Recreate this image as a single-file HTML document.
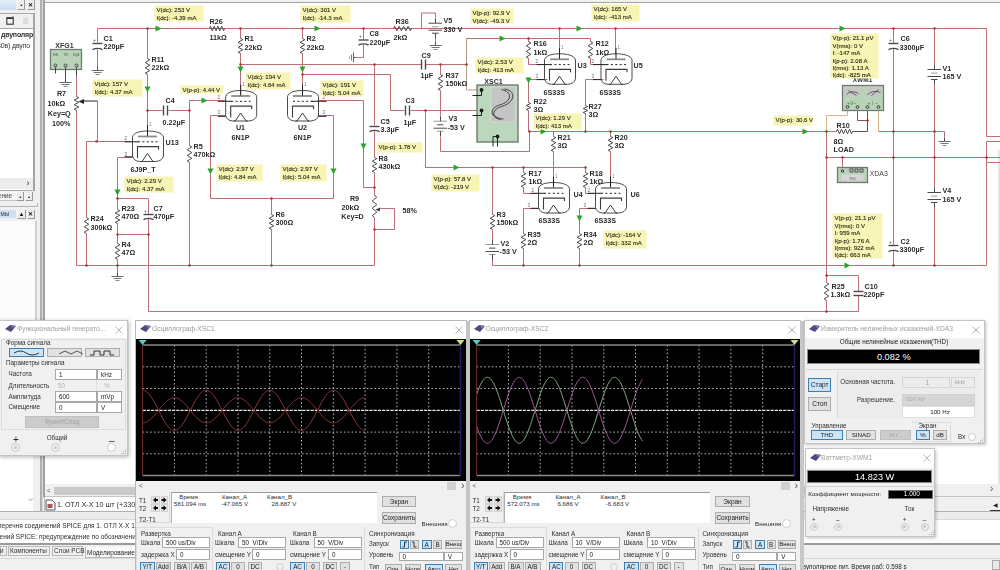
<!DOCTYPE html>
<html><head><meta charset="utf-8">
<style>
*{margin:0;padding:0;box-sizing:border-box}
html,body{width:1000px;height:570px;overflow:hidden;background:#f0f0f0;font-family:"Liberation Sans",sans-serif;color:#222;position:relative}
.a{position:absolute}
.t{position:absolute;white-space:nowrap;line-height:10px;color:#2a2a2a}
</style></head><body><div class="a" style="left:0;top:0;width:1000px;height:570px;overflow:hidden;filter:blur(0.4px)">
<div class="a" style="left:45px;top:1.5px;width:955px;height:484.5px;background:#fff;border-top:1px solid #a4a4a4"></div>
<div class="a" style="left:998px;top:150px;width:2px;height:334px;background:#e4e4e4"></div>
<div class="a" style="left:0px;top:0px;width:45px;height:570px;background:#f0f0f0"></div>
<div class="a" style="left:0px;top:0px;width:16px;height:10px;background:linear-gradient(#e4eef8,#cadcef)"></div>
<div class="a" style="left:17.4px;top:0px;width:7.800000000000001px;height:9.5px;background:#ededed;border-right:1px solid #9a9a9a;border-bottom:1px solid #9a9a9a;border-left:1px solid #fafafa"></div>
<div class="t" style="left:17.4px;top:-0.25px;width:7.800000000000001px;text-align:center;font-size:6px;color:#111;font-weight:bold">&#8226;</div>
<div class="a" style="left:27px;top:0px;width:7.5px;height:9.5px;background:#ededed;border-right:1px solid #9a9a9a;border-bottom:1px solid #9a9a9a;border-left:1px solid #fafafa"></div>
<div class="t" style="left:27px;top:-0.25px;width:7.5px;text-align:center;font-size:6px;color:#111;font-weight:bold">&#10005;</div>
<div class="a" style="left:0px;top:12.5px;width:34.5px;height:1.0px;background:#a8a8a8"></div>
<svg class="a" style="left:5px;top:15px" width="26" height="12"><rect x="1.8" y="2.8" width="6.4" height="6.4" fill="#f4f4f4" stroke="#333" stroke-width="1.1"/><line x1="1.8" y1="3.3" x2="8.2" y2="3.3" stroke="#333" stroke-width="1.4"/><circle cx="8" cy="2" r="0.8" fill="#a44"/><rect x="18" y="2.5" width="5.5" height="6.5" fill="#dcdcdc"/></svg>
<div class="a" style="left:0px;top:27.5px;width:34.5px;height:1.0px;background:#a8a8a8"></div>
<div class="a" style="left:0px;top:28.5px;width:33px;height:161.5px;background:#fff"></div>
<div class="a" style="left:33px;top:13.5px;width:2px;height:176.5px;background:#a4a4a4"></div>
<div class="a" style="left:0;top:28px;width:33px;height:30px;overflow:hidden">
<div class="t" style="left:1px;top:2px;font-size:7px;color:#333;font-weight:bold;letter-spacing:-0.2px">двуполяр</div>
<div class="t" style="left:-3px;top:12.5px;font-size:6.9px;color:#333;letter-spacing:-0.1px">30в) двупо</div>
</div>
<div class="a" style="left:0px;top:178.4px;width:33px;height:11.099999999999994px;background:#ececec"></div>
<div class="t" style="left:26.5px;top:178px;font-size:9px;color:#666;font-weight:bold">&#x203A;</div>
<div class="a" style="left:0px;top:189.5px;width:35px;height:1.0px;background:#a8a8a8"></div>
<div class="a" style="left:0px;top:192px;width:15.5px;height:8.599999999999994px;background:#f6f6f6;border-bottom:1px solid #c8c8c8"></div>
<div class="t" style="left:-2px;top:191.3px;font-size:6.3px;color:#444;">ение</div>
<div class="a" style="left:16.4px;top:192px;width:7.600000000000001px;height:9px;background:#ededed;border-right:1px solid #9a9a9a;border-bottom:1px solid #9a9a9a;border-left:1px solid #fafafa"></div>
<div class="t" style="left:16.4px;top:191.5px;width:7.600000000000001px;text-align:center;font-size:6px;color:#111;font-weight:bold">&#8226;</div>
<div class="a" style="left:25px;top:192px;width:8px;height:9px;background:#ededed;border-right:1px solid #9a9a9a;border-bottom:1px solid #9a9a9a;border-left:1px solid #fafafa"></div>
<div class="t" style="left:25px;top:191.5px;width:8px;text-align:center;font-size:6px;color:#111;font-weight:bold">&#8226;</div>
<div class="a" style="left:0px;top:206px;width:37.5px;height:1px;background:#b4b4b4"></div>
<div class="a" style="left:37px;top:203px;width:1px;height:4px;background:#b4b4b4"></div>
<div class="a" style="left:0px;top:210.3px;width:16px;height:8.199999999999989px;background:#cfe0f2"></div>
<div class="t" style="left:-3px;top:209.4px;font-size:6.3px;color:#444;">емы</div>
<div class="a" style="left:17.4px;top:210px;width:8.200000000000003px;height:8.5px;background:#ededed;border-right:1px solid #9a9a9a;border-bottom:1px solid #9a9a9a;border-left:1px solid #fafafa"></div>
<div class="t" style="left:17.4px;top:209.25px;width:8.200000000000003px;text-align:center;font-size:6px;color:#111;font-weight:bold">&#9650;</div>
<div class="a" style="left:27px;top:210px;width:7.799999999999997px;height:8.5px;background:#ededed;border-right:1px solid #9a9a9a;border-bottom:1px solid #9a9a9a;border-left:1px solid #fafafa"></div>
<div class="t" style="left:27px;top:209.25px;width:7.799999999999997px;text-align:center;font-size:6px;color:#111;font-weight:bold">&#10005;</div>
<div class="a" style="left:0px;top:221px;width:35px;height:99px;background:#fcfcfc"></div>
<div class="a" style="left:35px;top:221px;width:1.5px;height:99px;background:#d0d0d0"></div>
<div class="a" style="left:0px;top:456px;width:33px;height:56px;background:#fff"></div>
<div class="t" style="left:26px;top:492px;font-size:11px;color:#bbb;">&#8964;</div>
<div class="a" style="left:40px;top:0px;width:1.5px;height:512px;background:#b0b0b0"></div>
<div class="a" style="left:41.5px;top:0px;width:1.5px;height:512px;background:#dadada"></div>
<div class="a" style="left:43px;top:0px;width:1.5px;height:512px;background:#a0a0a0"></div>
<svg class="a" style="left:0;top:0" width="1000" height="486" font-family="Liberation Sans, sans-serif"><g transform="translate(0.5,0.5)">
<polyline points="97,28 986,28 986,136 1000,136" fill="none" stroke="#bc6e74" stroke-width="1"/>
<polyline points="1000,141 986,141 986,162 1000,162" fill="none" stroke="#bc6e74" stroke-width="1"/>
<polyline points="986,162 986,265" fill="none" stroke="#bc6e74" stroke-width="1"/>
<polyline points="97,28 97,42" fill="none" stroke="#bc6e74" stroke-width="1"/>
<polyline points="97,49 97,66" fill="none" stroke="#bc6e74" stroke-width="1"/>
<polyline points="147,28 147,58" fill="none" stroke="#bc6e74" stroke-width="1"/>
<polyline points="147,74 147,136" fill="none" stroke="#bc6e74" stroke-width="1"/>
<polyline points="147,110 162,110" fill="none" stroke="#bc6e74" stroke-width="1"/>
<polyline points="168,110 189,110" fill="none" stroke="#bc6e74" stroke-width="1"/>
<polyline points="189,110 189,100 225,100" fill="none" stroke="#bc6e74" stroke-width="1"/>
<polyline points="189,110 189,145" fill="none" stroke="#bc6e74" stroke-width="1"/>
<polyline points="189,162 189,265" fill="none" stroke="#bc6e74" stroke-width="1"/>
<polyline points="240,28 240,38" fill="none" stroke="#bc6e74" stroke-width="1"/>
<polyline points="240,53 240,95" fill="none" stroke="#bc6e74" stroke-width="1"/>
<polyline points="302,28 302,38" fill="none" stroke="#bc6e74" stroke-width="1"/>
<polyline points="302,53 302,95" fill="none" stroke="#bc6e74" stroke-width="1"/>
<polyline points="240,64 421,64" fill="none" stroke="#bc6e74" stroke-width="1"/>
<polyline points="425,64 466,64" fill="none" stroke="#bc6e74" stroke-width="1"/>
<polyline points="302,74 390,74 390,110 404,110" fill="none" stroke="#bc6e74" stroke-width="1"/>
<polyline points="410,110 480,110" fill="none" stroke="#bc6e74" stroke-width="1"/>
<polyline points="363,28 363,39" fill="none" stroke="#bc6e74" stroke-width="1"/>
<polyline points="363,44 363,57 355,57" fill="none" stroke="#bc6e74" stroke-width="1"/>
<polyline points="411,28 421,28 421,12.5 435,12.5 435,17" fill="none" stroke="#bc6e74" stroke-width="1"/>
<polyline points="435,33 435,41" fill="none" stroke="#bc6e74" stroke-width="1"/>
<polyline points="317,100 363,100 363,187 374,187" fill="none" stroke="#bc6e74" stroke-width="1"/>
<polyline points="317,115 333,115 333,198 210,198 210,115 225,115" fill="none" stroke="#bc6e74" stroke-width="1"/>
<polyline points="97,100.5 97,141 132,141" fill="none" stroke="#bc6e74" stroke-width="1"/>
<polyline points="86,141 132,141" fill="none" stroke="#bc6e74" stroke-width="1"/>
<polyline points="86,141 86,217" fill="none" stroke="#bc6e74" stroke-width="1"/>
<polyline points="86,233 86,265" fill="none" stroke="#bc6e74" stroke-width="1"/>
<polyline points="76,75 76,96" fill="none" stroke="#bc6e74" stroke-width="1"/>
<polyline points="76,110 76,265 374,265 374,229" fill="none" stroke="#bc6e74" stroke-width="1"/>
<polyline points="132,157 117,157 117,209" fill="none" stroke="#bc6e74" stroke-width="1"/>
<polyline points="117,223 117,243" fill="none" stroke="#bc6e74" stroke-width="1"/>
<polyline points="117,259 117,272" fill="none" stroke="#bc6e74" stroke-width="1"/>
<polyline points="117,234 148,234" fill="none" stroke="#bc6e74" stroke-width="1"/>
<polyline points="117,198 148,198 148,214" fill="none" stroke="#bc6e74" stroke-width="1"/>
<polyline points="148,218 148,311 858,311" fill="none" stroke="#bc6e74" stroke-width="1"/>
<polyline points="271,198 271,214" fill="none" stroke="#bc6e74" stroke-width="1"/>
<polyline points="271,229 271,265" fill="none" stroke="#bc6e74" stroke-width="1"/>
<polyline points="374,64 374,125" fill="none" stroke="#bc6e74" stroke-width="1"/>
<polyline points="374,130 374,157" fill="none" stroke="#bc6e74" stroke-width="1"/>
<polyline points="374,172 374,195" fill="none" stroke="#bc6e74" stroke-width="1"/>
<polyline points="374,217 374,229" fill="none" stroke="#bc6e74" stroke-width="1"/>
<polyline points="380,208 394,208 394,229 374,229" fill="none" stroke="#bc6e74" stroke-width="1"/>
<polyline points="425,110 425,167 585,167" fill="none" stroke="#bc6e74" stroke-width="1"/>
<polyline points="440,64 440,74" fill="none" stroke="#bc6e74" stroke-width="1"/>
<polyline points="440,90 440,115" fill="none" stroke="#bc6e74" stroke-width="1"/>
<polyline points="440,136 440,151 529,151 529,131" fill="none" stroke="#bc6e74" stroke-width="1"/>
<polyline points="466,38 466,89.5 480,89.5" fill="none" stroke="#b49c8c" stroke-width="1"/>
<polyline points="466,38 590,38 590,41" fill="none" stroke="#bc6e74" stroke-width="1"/>
<polyline points="528,38 528,41" fill="none" stroke="#bc6e74" stroke-width="1"/>
<polyline points="528,58 528,64 547,64" fill="none" stroke="#bc6e74" stroke-width="1"/>
<polyline points="590,58 590,64 603,64" fill="none" stroke="#bc6e74" stroke-width="1"/>
<polyline points="559,28 559,54" fill="none" stroke="#bc6e74" stroke-width="1"/>
<polyline points="615,28 615,54" fill="none" stroke="#bc6e74" stroke-width="1"/>
<polyline points="547,79 528,79 528,102" fill="none" stroke="#bc6e74" stroke-width="1"/>
<polyline points="528,110 528,131" fill="none" stroke="#bc6e74" stroke-width="1"/>
<polyline points="603,79 585,79 585,105" fill="none" stroke="#bc6e74" stroke-width="1"/>
<polyline points="585,113 585,131" fill="none" stroke="#bc6e74" stroke-width="1"/>
<polyline points="529,131 836,131" fill="none" stroke="#bc6e74" stroke-width="1"/>
<polyline points="553,131 553,136" fill="none" stroke="#bc6e74" stroke-width="1"/>
<polyline points="553,151 553,182" fill="none" stroke="#bc6e74" stroke-width="1"/>
<polyline points="610,131 610,136" fill="none" stroke="#bc6e74" stroke-width="1"/>
<polyline points="610,151 610,182" fill="none" stroke="#bc6e74" stroke-width="1"/>
<polyline points="523,167 523,172" fill="none" stroke="#bc6e74" stroke-width="1"/>
<polyline points="523,187 523,193 540,193" fill="none" stroke="#bc6e74" stroke-width="1"/>
<polyline points="585,167 585,172" fill="none" stroke="#bc6e74" stroke-width="1"/>
<polyline points="585,187 585,193 596,193" fill="none" stroke="#bc6e74" stroke-width="1"/>
<polyline points="492,167 492,214" fill="none" stroke="#bc6e74" stroke-width="1"/>
<polyline points="492,229 492,240" fill="none" stroke="#bc6e74" stroke-width="1"/>
<polyline points="492,258 492,265" fill="none" stroke="#bc6e74" stroke-width="1"/>
<polyline points="539,208 523,208 523,233" fill="none" stroke="#bc6e74" stroke-width="1"/>
<polyline points="523,248 523,265" fill="none" stroke="#bc6e74" stroke-width="1"/>
<polyline points="596,208 579,208 579,233" fill="none" stroke="#bc6e74" stroke-width="1"/>
<polyline points="579,248 579,265" fill="none" stroke="#bc6e74" stroke-width="1"/>
<polyline points="492,265 986,265" fill="none" stroke="#bc6e74" stroke-width="1"/>
<polyline points="847,106 847,115 826,115 826,131" fill="none" stroke="#d4b48c" stroke-width="1"/>
<polyline points="857,106 857,120 867,120" fill="none" stroke="#9a4a4a" stroke-width="1"/>
<polyline points="852,131 867,131 867,106" fill="none" stroke="#555" stroke-width="1"/>
<polyline points="878,106 878,131" fill="none" stroke="#d4b48c" stroke-width="1"/>
<polyline points="878,131 944,131 944,137" fill="none" stroke="#bc6e74" stroke-width="1"/>
<polyline points="826,131 826,157 1000,157" fill="none" stroke="#bc6e74" stroke-width="1"/>
<polyline points="826,157 826,282" fill="none" stroke="#bc6e74" stroke-width="1"/>
<polyline points="826,300 826,311" fill="none" stroke="#bc6e74" stroke-width="1"/>
<polyline points="826,275 858,275 858,291" fill="none" stroke="#bc6e74" stroke-width="1"/>
<polyline points="858,295 858,311" fill="none" stroke="#bc6e74" stroke-width="1"/>
<polyline points="842,157 842,170" fill="none" stroke="#bc6e74" stroke-width="1"/>
<polyline points="893,28 893,43" fill="none" stroke="#bc6e74" stroke-width="1"/>
<polyline points="893,48 893,245" fill="none" stroke="#bc6e74" stroke-width="1"/>
<polyline points="893,250 893,265" fill="none" stroke="#bc6e74" stroke-width="1"/>
<polyline points="934,28 934,64" fill="none" stroke="#bc6e74" stroke-width="1"/>
<polyline points="934,79 934,192" fill="none" stroke="#bc6e74" stroke-width="1"/>
<polyline points="934,203 934,265" fill="none" stroke="#bc6e74" stroke-width="1"/>
<circle cx="147" cy="28" r="1.3" fill="#a83838"/>
<circle cx="240" cy="28" r="1.3" fill="#a83838"/>
<circle cx="302" cy="28" r="1.3" fill="#a83838"/>
<circle cx="363" cy="28" r="1.3" fill="#a83838"/>
<circle cx="559" cy="28" r="1.3" fill="#a83838"/>
<circle cx="615" cy="28" r="1.3" fill="#a83838"/>
<circle cx="893" cy="28" r="1.3" fill="#a83838"/>
<circle cx="934" cy="28" r="1.3" fill="#a83838"/>
<circle cx="240" cy="64" r="1.3" fill="#a83838"/>
<circle cx="374" cy="64" r="1.3" fill="#a83838"/>
<circle cx="440" cy="64" r="1.3" fill="#a83838"/>
<circle cx="466" cy="64" r="1.3" fill="#a83838"/>
<circle cx="302" cy="74" r="1.3" fill="#a83838"/>
<circle cx="147" cy="110" r="1.3" fill="#a83838"/>
<circle cx="189" cy="110" r="1.3" fill="#a83838"/>
<circle cx="425" cy="110" r="1.3" fill="#a83838"/>
<circle cx="96" cy="141" r="1.3" fill="#a83838"/>
<circle cx="117" cy="198" r="1.3" fill="#a83838"/>
<circle cx="271" cy="198" r="1.3" fill="#a83838"/>
<circle cx="117" cy="234" r="1.3" fill="#a83838"/>
<circle cx="148" cy="234" r="1.3" fill="#a83838"/>
<circle cx="86" cy="265" r="1.3" fill="#a83838"/>
<circle cx="117" cy="265" r="1.3" fill="#a83838"/>
<circle cx="189" cy="265" r="1.3" fill="#a83838"/>
<circle cx="271" cy="265" r="1.3" fill="#a83838"/>
<circle cx="374" cy="187" r="1.3" fill="#a83838"/>
<circle cx="374" cy="229" r="1.3" fill="#a83838"/>
<circle cx="528" cy="38" r="1.3" fill="#a83838"/>
<circle cx="529" cy="131" r="1.3" fill="#a83838"/>
<circle cx="585" cy="131" r="1.3" fill="#a83838"/>
<circle cx="610" cy="131" r="1.3" fill="#a83838"/>
<circle cx="826" cy="131" r="1.3" fill="#a83838"/>
<circle cx="893" cy="131" r="1.3" fill="#a83838"/>
<circle cx="934" cy="131" r="1.3" fill="#a83838"/>
<circle cx="867" cy="120" r="1.3" fill="#a83838"/>
<circle cx="492" cy="167" r="1.3" fill="#a83838"/>
<circle cx="523" cy="167" r="1.3" fill="#a83838"/>
<circle cx="585" cy="167" r="1.3" fill="#a83838"/>
<circle cx="826" cy="157" r="1.3" fill="#a83838"/>
<circle cx="842" cy="157" r="1.3" fill="#a83838"/>
<circle cx="893" cy="157" r="1.3" fill="#a83838"/>
<circle cx="934" cy="157" r="1.3" fill="#a83838"/>
<circle cx="986" cy="157" r="1.3" fill="#a83838"/>
<circle cx="523" cy="265" r="1.3" fill="#a83838"/>
<circle cx="579" cy="265" r="1.3" fill="#a83838"/>
<circle cx="893" cy="265" r="1.3" fill="#a83838"/>
<circle cx="934" cy="265" r="1.3" fill="#a83838"/>
<circle cx="826" cy="275" r="1.3" fill="#a83838"/>
<circle cx="826" cy="311" r="1.3" fill="#a83838"/>
<polygon points="155,25 161,28 155,31" fill="#2aa52a"/>
<polygon points="314,25 320,28 314,31" fill="#2aa52a"/>
<polygon points="499,35 505,38 499,41" fill="#2aa52a"/>
<polygon points="576,25 582,28 576,31" fill="#2aa52a"/>
<polygon points="839,25 845,28 839,31" fill="#2aa52a"/>
<polygon points="201,97 207,100 201,103" fill="#2aa52a"/>
<polygon points="453,164 459,167 453,170" fill="#2aa52a"/>
<polygon points="540,128 546,131 540,134" fill="#2aa52a"/>
<polygon points="802,128 808,131 802,134" fill="#2aa52a"/>
<polygon points="844,262 850,265 844,268" fill="#2aa52a"/>
<polygon points="144,86 150,86 147,92" fill="#2aa52a"/>
<polygon points="237,66 243,66 240,72" fill="#2aa52a"/>
<polygon points="299,66 305,66 302,72" fill="#2aa52a"/>
<polygon points="114,189 120,189 117,195" fill="#2aa52a"/>
<polygon points="207,168 213,168 210,174" fill="#2aa52a"/>
<polygon points="330,168 336,168 333,174" fill="#2aa52a"/>
<polygon points="360,143 366,143 363,149" fill="#2aa52a"/>
<polygon points="525,77 531,77 528,83" fill="#2aa52a"/>
<polygon points="576,215 582,215 579,221" fill="#2aa52a"/>
<polyline points="147.0,58.0 149.3,59.3 144.7,62.0 149.3,64.7 144.7,67.3 149.3,70.0 144.7,72.7 147.0,74.0" fill="none" stroke="#4a4a4a" stroke-width="1"/>
<polyline points="240.0,38.0 242.3,39.2 237.7,41.8 242.3,44.2 237.7,46.8 242.3,49.2 237.7,51.8 240.0,53.0" fill="none" stroke="#4a4a4a" stroke-width="1"/>
<polyline points="302.0,38.0 304.3,39.2 299.7,41.8 304.3,44.2 299.7,46.8 304.3,49.2 299.7,51.8 302.0,53.0" fill="none" stroke="#4a4a4a" stroke-width="1"/>
<polyline points="189.0,145.0 191.3,146.4 186.7,149.2 191.3,152.1 186.7,154.9 191.3,157.8 186.7,160.6 189.0,162.0" fill="none" stroke="#4a4a4a" stroke-width="1"/>
<polyline points="86.0,217.0 88.3,218.3 83.7,221.0 88.3,223.7 83.7,226.3 88.3,229.0 83.7,231.7 86.0,233.0" fill="none" stroke="#4a4a4a" stroke-width="1"/>
<polyline points="117.0,209.0 119.3,210.2 114.7,212.5 119.3,214.8 114.7,217.2 119.3,219.5 114.7,221.8 117.0,223.0" fill="none" stroke="#4a4a4a" stroke-width="1"/>
<polyline points="117.0,243.0 119.3,244.3 114.7,247.0 119.3,249.7 114.7,252.3 119.3,255.0 114.7,257.7 117.0,259.0" fill="none" stroke="#4a4a4a" stroke-width="1"/>
<polyline points="271.0,214.0 273.3,215.2 268.7,217.8 273.3,220.2 268.7,222.8 273.3,225.2 268.7,227.8 271.0,229.0" fill="none" stroke="#4a4a4a" stroke-width="1"/>
<polyline points="374.0,157.0 376.3,158.2 371.7,160.8 376.3,163.2 371.7,165.8 376.3,168.2 371.7,170.8 374.0,172.0" fill="none" stroke="#4a4a4a" stroke-width="1"/>
<polyline points="440.0,74.0 442.3,75.3 437.7,78.0 442.3,80.7 437.7,83.3 442.3,86.0 437.7,88.7 440.0,90.0" fill="none" stroke="#4a4a4a" stroke-width="1"/>
<polyline points="528.0,41.0 530.3,42.4 525.7,45.2 530.3,48.1 525.7,50.9 530.3,53.8 525.7,56.6 528.0,58.0" fill="none" stroke="#4a4a4a" stroke-width="1"/>
<polyline points="590.0,41.0 592.3,42.4 587.7,45.2 592.3,48.1 587.7,50.9 592.3,53.8 587.7,56.6 590.0,58.0" fill="none" stroke="#4a4a4a" stroke-width="1"/>
<polyline points="528.0,102.0 530.3,103.0 525.7,105.0 530.3,107.0 525.7,109.0 528.0,110.0" fill="none" stroke="#4a4a4a" stroke-width="1"/>
<polyline points="585.0,105.0 587.3,106.0 582.7,108.0 587.3,110.0 582.7,112.0 585.0,113.0" fill="none" stroke="#4a4a4a" stroke-width="1"/>
<polyline points="553.0,136.0 555.3,137.2 550.7,139.8 555.3,142.2 550.7,144.8 555.3,147.2 550.7,149.8 553.0,151.0" fill="none" stroke="#4a4a4a" stroke-width="1"/>
<polyline points="610.0,136.0 612.3,137.2 607.7,139.8 612.3,142.2 607.7,144.8 612.3,147.2 607.7,149.8 610.0,151.0" fill="none" stroke="#4a4a4a" stroke-width="1"/>
<polyline points="523.0,172.0 525.3,173.2 520.7,175.8 525.3,178.2 520.7,180.8 525.3,183.2 520.7,185.8 523.0,187.0" fill="none" stroke="#4a4a4a" stroke-width="1"/>
<polyline points="585.0,172.0 587.3,173.2 582.7,175.8 587.3,178.2 582.7,180.8 587.3,183.2 582.7,185.8 585.0,187.0" fill="none" stroke="#4a4a4a" stroke-width="1"/>
<polyline points="492.0,214.0 494.3,215.2 489.7,217.8 494.3,220.2 489.7,222.8 494.3,225.2 489.7,227.8 492.0,229.0" fill="none" stroke="#4a4a4a" stroke-width="1"/>
<polyline points="523.0,233.0 525.3,234.2 520.7,236.8 525.3,239.2 520.7,241.8 525.3,244.2 520.7,246.8 523.0,248.0" fill="none" stroke="#4a4a4a" stroke-width="1"/>
<polyline points="579.0,233.0 581.3,234.2 576.7,236.8 581.3,239.2 576.7,241.8 581.3,244.2 576.7,246.8 579.0,248.0" fill="none" stroke="#4a4a4a" stroke-width="1"/>
<polyline points="826.0,282.0 828.3,283.5 823.7,286.5 828.3,289.5 823.7,292.5 828.3,295.5 823.7,298.5 826.0,300.0" fill="none" stroke="#4a4a4a" stroke-width="1"/>
<polyline points="76.0,96.0 78.3,97.2 73.7,99.5 78.3,101.8 73.7,104.2 78.3,106.5 73.7,108.8 76.0,110.0" fill="none" stroke="#4a4a4a" stroke-width="1"/>
<polyline points="374.0,195.0 376.3,196.8 371.7,200.5 376.3,204.2 371.7,207.8 376.3,211.5 371.7,215.2 374.0,217.0" fill="none" stroke="#4a4a4a" stroke-width="1"/>
<polyline points="209.0,28.0 209.9,25.7 211.8,30.3 213.7,25.7 215.6,30.3 217.4,25.7 219.3,30.3 221.2,25.7 223.1,30.3 224.0,28.0" fill="none" stroke="#4a4a4a" stroke-width="1"/>
<polyline points="393.0,28.0 394.1,25.7 396.4,30.3 398.6,25.7 400.9,30.3 403.1,25.7 405.4,30.3 407.6,25.7 409.9,30.3 411.0,28.0" fill="none" stroke="#4a4a4a" stroke-width="1"/>
<polyline points="836.0,131.0 837.0,128.7 839.0,133.3 841.0,128.7 843.0,133.3 845.0,128.7 847.0,133.3 849.0,128.7 851.0,133.3 852.0,131.0" fill="none" stroke="#4a4a4a" stroke-width="1"/>
<polygon points="83.5,98.5 78,101 83.5,103.5" fill="#222"/>
<polyline points="83,100.5 97,100.5" fill="none" stroke="#222" stroke-width="1"/>
<polygon points="380,207 375,209 379,211" fill="#333"/>
<line x1="92" y1="43" x2="102" y2="43" stroke="#4a4a4a" stroke-width="1.4"/>
<path d="M92,49.2 Q97,46.5 102,49.2" fill="none" stroke="#4a4a4a" stroke-width="1.4"/>
<text x="92.5" y="41" font-size="5" font-weight="normal" text-anchor="start" fill="#555">+</text>
<line x1="358" y1="39.5" x2="368" y2="39.5" stroke="#4a4a4a" stroke-width="1.4"/>
<path d="M358,44.7 Q363,42.0 368,44.7" fill="none" stroke="#4a4a4a" stroke-width="1.4"/>
<text x="358.5" y="37.5" font-size="5" font-weight="normal" text-anchor="start" fill="#555">+</text>
<line x1="888" y1="43" x2="898" y2="43" stroke="#4a4a4a" stroke-width="1.4"/>
<path d="M888,49.2 Q893,46.5 898,49.2" fill="none" stroke="#4a4a4a" stroke-width="1.4"/>
<text x="888.5" y="41" font-size="5" font-weight="normal" text-anchor="start" fill="#555">+</text>
<line x1="888" y1="245" x2="898" y2="245" stroke="#4a4a4a" stroke-width="1.4"/>
<path d="M888,251.2 Q893,248.5 898,251.2" fill="none" stroke="#4a4a4a" stroke-width="1.4"/>
<text x="888.5" y="243" font-size="5" font-weight="normal" text-anchor="start" fill="#555">+</text>
<line x1="143" y1="214" x2="153" y2="214" stroke="#4a4a4a" stroke-width="1.4"/>
<path d="M143,219.2 Q148,216.5 153,219.2" fill="none" stroke="#4a4a4a" stroke-width="1.4"/>
<text x="143.5" y="212" font-size="5" font-weight="normal" text-anchor="start" fill="#555">+</text>
<line x1="369" y1="126" x2="379" y2="126" stroke="#4a4a4a" stroke-width="1.4"/>
<path d="M369,131.2 Q374,128.5 379,131.2" fill="none" stroke="#4a4a4a" stroke-width="1.4"/>
<line x1="853" y1="291" x2="863" y2="291" stroke="#4a4a4a" stroke-width="1.4"/><line x1="853" y1="295" x2="863" y2="295" stroke="#4a4a4a" stroke-width="1.4"/>
<line x1="421" y1="59" x2="421" y2="69" stroke="#4a4a4a" stroke-width="1.4"/>
<line x1="425" y1="59" x2="425" y2="69" stroke="#4a4a4a" stroke-width="1.4"/>
<line x1="405" y1="105" x2="405" y2="115" stroke="#4a4a4a" stroke-width="1.4"/>
<line x1="409" y1="105" x2="409" y2="115" stroke="#4a4a4a" stroke-width="1.4"/>
<line x1="163" y1="105" x2="163" y2="115" stroke="#4a4a4a" stroke-width="1.4"/>
<line x1="167" y1="105" x2="167" y2="115" stroke="#4a4a4a" stroke-width="1.4"/>
<line x1="428" y1="22.7" x2="441.5" y2="22.7" stroke="#4a4a4a" stroke-width="1"/>
<line x1="431.5" y1="26.3" x2="438" y2="26.3" stroke="#999" stroke-width="1"/>
<line x1="428" y1="29.7" x2="441.5" y2="29.7" stroke="#4a4a4a" stroke-width="1"/>
<line x1="431.5" y1="32.7" x2="438" y2="32.7" stroke="#4a4a4a" stroke-width="1"/>
<line x1="435" y1="17.7" x2="435" y2="22.7" stroke="#4a4a4a" stroke-width="1"/>
<line x1="435" y1="32.7" x2="435" y2="37.7" stroke="#4a4a4a" stroke-width="1"/>
<line x1="433" y1="120.7" x2="446.5" y2="120.7" stroke="#999" stroke-width="1"/>
<line x1="436.5" y1="124.3" x2="443" y2="124.3" stroke="#4a4a4a" stroke-width="1"/>
<line x1="433" y1="127.7" x2="446.5" y2="127.7" stroke="#4a4a4a" stroke-width="1"/>
<line x1="436.5" y1="130.7" x2="443" y2="130.7" stroke="#999" stroke-width="1"/>
<line x1="440" y1="115.7" x2="440" y2="120.7" stroke="#4a4a4a" stroke-width="1"/>
<line x1="440" y1="130.7" x2="440" y2="135.7" stroke="#4a4a4a" stroke-width="1"/>
<line x1="485" y1="244" x2="498.5" y2="244" stroke="#999" stroke-width="1"/>
<line x1="488.5" y1="247.6" x2="495" y2="247.6" stroke="#4a4a4a" stroke-width="1"/>
<line x1="485" y1="251" x2="498.5" y2="251" stroke="#4a4a4a" stroke-width="1"/>
<line x1="488.5" y1="254" x2="495" y2="254" stroke="#999" stroke-width="1"/>
<line x1="492" y1="239" x2="492" y2="244" stroke="#4a4a4a" stroke-width="1"/>
<line x1="492" y1="254" x2="492" y2="259" stroke="#4a4a4a" stroke-width="1"/>
<line x1="927" y1="69" x2="940.5" y2="69" stroke="#4a4a4a" stroke-width="1"/>
<line x1="930.5" y1="72.6" x2="937" y2="72.6" stroke="#999" stroke-width="1"/>
<line x1="927" y1="76" x2="940.5" y2="76" stroke="#4a4a4a" stroke-width="1"/>
<line x1="930.5" y1="79" x2="937" y2="79" stroke="#4a4a4a" stroke-width="1"/>
<line x1="934" y1="64" x2="934" y2="69" stroke="#4a4a4a" stroke-width="1"/>
<line x1="934" y1="79" x2="934" y2="84" stroke="#4a4a4a" stroke-width="1"/>
<line x1="927" y1="192" x2="940.5" y2="192" stroke="#4a4a4a" stroke-width="1"/>
<line x1="930.5" y1="195.6" x2="937" y2="195.6" stroke="#999" stroke-width="1"/>
<line x1="927" y1="199" x2="940.5" y2="199" stroke="#4a4a4a" stroke-width="1"/>
<line x1="930.5" y1="202" x2="937" y2="202" stroke="#4a4a4a" stroke-width="1"/>
<line x1="934" y1="187" x2="934" y2="192" stroke="#4a4a4a" stroke-width="1"/>
<line x1="934" y1="202" x2="934" y2="207" stroke="#4a4a4a" stroke-width="1"/>
<line x1="97" y1="66" x2="97" y2="70" stroke="#4a4a4a" stroke-width="1"/>
<line x1="91" y1="70" x2="103" y2="70" stroke="#666" stroke-width="1"/>
<line x1="93" y1="72" x2="101" y2="72" stroke="#777" stroke-width="1"/>
<line x1="95" y1="74" x2="99" y2="74" stroke="#888" stroke-width="1"/>
<line x1="65" y1="78" x2="65" y2="82" stroke="#4a4a4a" stroke-width="1"/>
<line x1="59" y1="82" x2="71" y2="82" stroke="#666" stroke-width="1"/>
<line x1="61" y1="84" x2="69" y2="84" stroke="#777" stroke-width="1"/>
<line x1="63" y1="86" x2="67" y2="86" stroke="#888" stroke-width="1"/>
<line x1="117" y1="272" x2="117" y2="276" stroke="#4a4a4a" stroke-width="1"/>
<line x1="111" y1="276" x2="123" y2="276" stroke="#666" stroke-width="1"/>
<line x1="113" y1="278" x2="121" y2="278" stroke="#777" stroke-width="1"/>
<line x1="115" y1="280" x2="119" y2="280" stroke="#888" stroke-width="1"/>
<line x1="435" y1="41" x2="435" y2="45" stroke="#4a4a4a" stroke-width="1"/>
<line x1="429" y1="45" x2="441" y2="45" stroke="#666" stroke-width="1"/>
<line x1="431" y1="47" x2="439" y2="47" stroke="#777" stroke-width="1"/>
<line x1="433" y1="49" x2="437" y2="49" stroke="#888" stroke-width="1"/>
<line x1="944" y1="137" x2="944" y2="141" stroke="#4a4a4a" stroke-width="1"/>
<line x1="938" y1="141" x2="950" y2="141" stroke="#666" stroke-width="1"/>
<line x1="940" y1="143" x2="948" y2="143" stroke="#777" stroke-width="1"/>
<line x1="942" y1="145" x2="946" y2="145" stroke="#888" stroke-width="1"/>
<line x1="355" y1="57" x2="353" y2="57" stroke="#4a4a4a"/><line x1="353" y1="52" x2="353" y2="62" stroke="#666"/><line x1="351" y1="54" x2="351" y2="60" stroke="#777"/><line x1="349" y1="56" x2="349" y2="58" stroke="#888"/>
<path d="M132,155.5 L132,136.5 C133,132.0 140,130.5 147,130.5 C154,130.5 162,132.0 163,136.5 L163,155.5 Q162,160.5 155,161.0 L139,161.0 Q133,160.5 132,155.5 Z" fill="none" stroke="#4a4a4a" stroke-width="1"/>
<line x1="137.5" y1="136.0" x2="156.5" y2="136.0" stroke="#8c8c8c" stroke-width="1.8"/>
<line x1="137.5" y1="141.3" x2="157" y2="141.3" stroke="#222" stroke-width="1" stroke-dasharray="2,2.4"/>
<polyline points="137,157.5 137,146.1 158,146.1 158,149.0" fill="none" stroke="#3c3c3c" stroke-width="1.1"/>
<polyline points="140,161.0 141.5,161.0 147,153.0 152.5,161.0 154,161.0" fill="none" stroke="#3c3c3c" stroke-width="1"/>
<line x1="147" y1="124.5" x2="147" y2="135.5" stroke="#222" stroke-width="1"/>
<line x1="124" y1="141.3" x2="138" y2="141.3" stroke="#222" stroke-width="1"/>
<line x1="124" y1="156.3" x2="132" y2="156.3" stroke="#222" stroke-width="1"/>
<text x="148.5" y="125.5" font-size="4.5" font-weight="normal" text-anchor="start" fill="#777">1</text>
<path d="M225.2,115 L225.2,96 C226.2,91.5 233.2,90 240.2,90 C247.2,90 255.2,91.5 256.2,96 L256.2,115 Q255.2,120 248.2,120.5 L232.2,120.5 Q226.2,120 225.2,115 Z" fill="none" stroke="#4a4a4a" stroke-width="1"/>
<line x1="230.7" y1="95.5" x2="249.7" y2="95.5" stroke="#8c8c8c" stroke-width="1.8"/>
<line x1="230.7" y1="100.8" x2="250.2" y2="100.8" stroke="#222" stroke-width="1" stroke-dasharray="2,2.4"/>
<polyline points="230.2,117 230.2,105.6 251.2,105.6 251.2,108.5" fill="none" stroke="#3c3c3c" stroke-width="1.1"/>
<polyline points="233.2,120.5 234.7,120.5 240.2,112.5 245.7,120.5 247.2,120.5" fill="none" stroke="#3c3c3c" stroke-width="1"/>
<line x1="240.2" y1="84" x2="240.2" y2="95" stroke="#222" stroke-width="1"/>
<line x1="217.2" y1="100.8" x2="231.2" y2="100.8" stroke="#222" stroke-width="1"/>
<line x1="217.2" y1="115.8" x2="225.2" y2="115.8" stroke="#222" stroke-width="1"/>
<text x="241.7" y="85" font-size="4.5" font-weight="normal" text-anchor="start" fill="#777">1</text>
<path d="M287,115 L287,96 C288,91.5 295,90 302,90 C309,90 317,91.5 318,96 L318,115 Q317,120 310,120.5 L294,120.5 Q288,120 287,115 Z" fill="none" stroke="#4a4a4a" stroke-width="1"/>
<line x1="292.5" y1="95.5" x2="311.5" y2="95.5" stroke="#8c8c8c" stroke-width="1.8"/>
<line x1="292.5" y1="100.8" x2="312" y2="100.8" stroke="#222" stroke-width="1" stroke-dasharray="2,2.4"/>
<polyline points="292,117 292,105.6 313,105.6 313,108.5" fill="none" stroke="#3c3c3c" stroke-width="1.1"/>
<polyline points="295,120.5 296.5,120.5 302,112.5 307.5,120.5 309,120.5" fill="none" stroke="#3c3c3c" stroke-width="1"/>
<line x1="302" y1="84" x2="302" y2="95" stroke="#222" stroke-width="1"/>
<line x1="311" y1="100.8" x2="326" y2="100.8" stroke="#222" stroke-width="1"/>
<line x1="318" y1="115.8" x2="326" y2="115.8" stroke="#222" stroke-width="1"/>
<text x="303.5" y="85" font-size="4.5" font-weight="normal" text-anchor="start" fill="#777">1</text>
<path d="M544,78.3 L544,59.3 C545,54.8 552,53.3 559,53.3 C566,53.3 574,54.8 575,59.3 L575,78.3 Q574,83.3 567,83.8 L551,83.8 Q545,83.3 544,78.3 Z" fill="none" stroke="#4a4a4a" stroke-width="1"/>
<line x1="549.5" y1="58.8" x2="568.5" y2="58.8" stroke="#8c8c8c" stroke-width="1.8"/>
<line x1="549.5" y1="64.1" x2="569" y2="64.1" stroke="#222" stroke-width="1" stroke-dasharray="2,2.4"/>
<polyline points="549,80.3 549,68.89999999999999 570,68.89999999999999 570,71.8" fill="none" stroke="#3c3c3c" stroke-width="1.1"/>
<polyline points="552,83.8 553.5,83.8 559,75.8 564.5,83.8 566,83.8" fill="none" stroke="#3c3c3c" stroke-width="1"/>
<line x1="559" y1="47.3" x2="559" y2="58.3" stroke="#222" stroke-width="1"/>
<line x1="536" y1="64.1" x2="550" y2="64.1" stroke="#222" stroke-width="1"/>
<line x1="536" y1="79.1" x2="544" y2="79.1" stroke="#222" stroke-width="1"/>
<text x="560.5" y="48.3" font-size="4.5" font-weight="normal" text-anchor="start" fill="#777">1</text>
<path d="M600.5,78.3 L600.5,59.3 C601.5,54.8 608.5,53.3 615.5,53.3 C622.5,53.3 630.5,54.8 631.5,59.3 L631.5,78.3 Q630.5,83.3 623.5,83.8 L607.5,83.8 Q601.5,83.3 600.5,78.3 Z" fill="none" stroke="#4a4a4a" stroke-width="1"/>
<line x1="606.0" y1="58.8" x2="625.0" y2="58.8" stroke="#8c8c8c" stroke-width="1.8"/>
<line x1="606.0" y1="64.1" x2="625.5" y2="64.1" stroke="#222" stroke-width="1" stroke-dasharray="2,2.4"/>
<polyline points="605.5,80.3 605.5,68.89999999999999 626.5,68.89999999999999 626.5,71.8" fill="none" stroke="#3c3c3c" stroke-width="1.1"/>
<polyline points="608.5,83.8 610.0,83.8 615.5,75.8 621.0,83.8 622.5,83.8" fill="none" stroke="#3c3c3c" stroke-width="1"/>
<line x1="615.5" y1="47.3" x2="615.5" y2="58.3" stroke="#222" stroke-width="1"/>
<line x1="592.5" y1="64.1" x2="606.5" y2="64.1" stroke="#222" stroke-width="1"/>
<line x1="592.5" y1="79.1" x2="600.5" y2="79.1" stroke="#222" stroke-width="1"/>
<text x="617.0" y="48.3" font-size="4.5" font-weight="normal" text-anchor="start" fill="#777">1</text>
<path d="M538,207 L538,188 C539,183.5 546,182 553,182 C560,182 568,183.5 569,188 L569,207 Q568,212 561,212.5 L545,212.5 Q539,212 538,207 Z" fill="none" stroke="#4a4a4a" stroke-width="1"/>
<line x1="543.5" y1="187.5" x2="562.5" y2="187.5" stroke="#8c8c8c" stroke-width="1.8"/>
<line x1="543.5" y1="192.8" x2="563" y2="192.8" stroke="#222" stroke-width="1" stroke-dasharray="2,2.4"/>
<polyline points="543,209 543,197.6 564,197.6 564,200.5" fill="none" stroke="#3c3c3c" stroke-width="1.1"/>
<polyline points="546,212.5 547.5,212.5 553,204.5 558.5,212.5 560,212.5" fill="none" stroke="#3c3c3c" stroke-width="1"/>
<line x1="553" y1="176" x2="553" y2="187" stroke="#222" stroke-width="1"/>
<line x1="530" y1="192.8" x2="544" y2="192.8" stroke="#222" stroke-width="1"/>
<line x1="530" y1="207.8" x2="538" y2="207.8" stroke="#222" stroke-width="1"/>
<text x="554.5" y="177" font-size="4.5" font-weight="normal" text-anchor="start" fill="#777">1</text>
<path d="M595,207 L595,188 C596,183.5 603,182 610,182 C617,182 625,183.5 626,188 L626,207 Q625,212 618,212.5 L602,212.5 Q596,212 595,207 Z" fill="none" stroke="#4a4a4a" stroke-width="1"/>
<line x1="600.5" y1="187.5" x2="619.5" y2="187.5" stroke="#8c8c8c" stroke-width="1.8"/>
<line x1="600.5" y1="192.8" x2="620" y2="192.8" stroke="#222" stroke-width="1" stroke-dasharray="2,2.4"/>
<polyline points="600,209 600,197.6 621,197.6 621,200.5" fill="none" stroke="#3c3c3c" stroke-width="1.1"/>
<polyline points="603,212.5 604.5,212.5 610,204.5 615.5,212.5 617,212.5" fill="none" stroke="#3c3c3c" stroke-width="1"/>
<line x1="610" y1="176" x2="610" y2="187" stroke="#222" stroke-width="1"/>
<line x1="587" y1="192.8" x2="601" y2="192.8" stroke="#222" stroke-width="1"/>
<line x1="587" y1="207.8" x2="595" y2="207.8" stroke="#222" stroke-width="1"/>
<text x="611.5" y="177" font-size="4.5" font-weight="normal" text-anchor="start" fill="#777">1</text>
<text x="124" y="139" font-size="4.5" font-weight="normal" text-anchor="start" fill="#666">2</text>
<text x="124" y="155" font-size="4.5" font-weight="normal" text-anchor="start" fill="#666">3</text>
<text x="217" y="98" font-size="4.5" font-weight="normal" text-anchor="start" fill="#666">2</text>
<text x="217" y="113" font-size="4.5" font-weight="normal" text-anchor="start" fill="#666">3</text>
<text x="322" y="98" font-size="4.5" font-weight="normal" text-anchor="start" fill="#666">2</text>
<text x="322" y="113" font-size="4.5" font-weight="normal" text-anchor="start" fill="#666">3</text>
<text x="535" y="62" font-size="4.5" font-weight="normal" text-anchor="start" fill="#666">2</text>
<text x="535" y="77" font-size="4.5" font-weight="normal" text-anchor="start" fill="#666">3</text>
<text x="591" y="62" font-size="4.5" font-weight="normal" text-anchor="start" fill="#666">2</text>
<text x="591" y="77" font-size="4.5" font-weight="normal" text-anchor="start" fill="#666">3</text>
<text x="531" y="191" font-size="4.5" font-weight="normal" text-anchor="start" fill="#666">2</text>
<text x="527" y="206" font-size="4.5" font-weight="normal" text-anchor="start" fill="#666">3</text>
<text x="587" y="191" font-size="4.5" font-weight="normal" text-anchor="start" fill="#666">2</text>
<text x="583" y="206" font-size="4.5" font-weight="normal" text-anchor="start" fill="#666">3</text>
<text x="64" y="47" font-size="7" font-weight="bold" text-anchor="middle" fill="#333">XFG1</text>
<rect x="50" y="49" width="31" height="20" fill="#b9d3b9" stroke="#6e7e6e" stroke-width="1.3"/>
<text x="55.0" y="55" font-size="3.2" font-weight="normal" text-anchor="middle" fill="#555">SIN</text>
<text x="65.3" y="55" font-size="3.2" font-weight="normal" text-anchor="middle" fill="#555">TRI</text>
<text x="75.6" y="55" font-size="3.2" font-weight="normal" text-anchor="middle" fill="#555">SQA</text>
<circle cx="55" cy="65" r="1.5" fill="none" stroke="#444"/>
<circle cx="65" cy="65" r="1.5" fill="none" stroke="#444"/>
<circle cx="76" cy="65" r="1.5" fill="none" stroke="#444"/>
<polyline points="55,66 55,73" fill="none" stroke="#4a4a4a" stroke-width="1"/>
<polyline points="65,66 65,78" fill="none" stroke="#4a4a4a" stroke-width="1"/>
<polyline points="76,66 76,75" fill="none" stroke="#4a4a4a" stroke-width="1"/>
<text x="493" y="83" font-size="7" font-weight="bold" text-anchor="middle" fill="#333">XSC1</text>
<rect x="476.5" y="84.5" width="41" height="57" fill="#bcd8bc" stroke="#707a70" stroke-width="1.4"/>
<rect x="490.5" y="86.5" width="24.5" height="35" fill="#c4c4c4" stroke="#e0e0e0" stroke-width="0.6"/>
<path d="M504,88.5 C516,90 515,102 501,106 C489,110 492,118 503,118.5 M501,89 C512,91 512,101 499,104.5 C488,108 490,117 500,119" fill="none" stroke="#222" stroke-width="0.8"/>
<circle cx="481" cy="89.5" r="1.9" fill="#1a1a1a"/>
<circle cx="481" cy="110" r="1.9" fill="#1a1a1a"/>
<circle cx="497" cy="136" r="1.9" fill="#1a1a1a"/>
<polyline points="472,95 481,95 481,90" fill="none" stroke="#222" stroke-width="1"/>
<polyline points="472,115 481,115 481,110" fill="none" stroke="#222" stroke-width="1"/>
<polyline points="492.5,146 492.5,136 497,136 497,146" fill="none" stroke="#222" stroke-width="1"/>
<text x="862" y="81.3" font-size="6.5" font-weight="bold" text-anchor="middle" fill="#333">XWM1</text>
<rect x="842" y="85" width="41" height="25" fill="#b9d3b9" stroke="#707870" stroke-width="1.3"/>
<rect x="844" y="87" width="16" height="9" fill="#c6c6c6"/><rect x="865" y="87" width="16" height="9" fill="#c6c6c6"/>
<path d="M846,94 Q851,89 858,93 M848,90 L856,95 M867,94 Q873,89 880,92 M871,95 L878,89" fill="none" stroke="#333" stroke-width="0.7"/>
<text x="851" y="104" font-size="5" font-weight="normal" text-anchor="middle" fill="#3a7a3a">+V&#8211;</text>
<text x="872" y="104" font-size="5" font-weight="normal" text-anchor="middle" fill="#3a7a3a">+ I &#8211;</text>
<circle cx="847" cy="106.5" r="1.4" fill="none" stroke="#444"/>
<circle cx="857" cy="106.5" r="1.4" fill="none" stroke="#444"/>
<circle cx="867" cy="106.5" r="1.4" fill="none" stroke="#444"/>
<circle cx="878" cy="106.5" r="1.4" fill="none" stroke="#444"/>
<rect x="837" y="167" width="30" height="15" fill="#b9d3b9" stroke="#707870" stroke-width="1.3"/>
<rect x="841" y="174" width="22" height="6" fill="#d6d6d6"/>
<text x="852" y="179" font-size="3.5" font-weight="normal" text-anchor="middle" fill="#666">THD</text>
<circle cx="842" cy="170.5" r="1.2" fill="none" stroke="#333"/>
<rect x="849.5" y="168.5" width="3" height="3" fill="none" stroke="#333" stroke-width="0.8"/>
<rect x="854.5" y="168.5" width="3" height="3" fill="none" stroke="#333" stroke-width="0.8"/>
<rect x="859.5" y="168.5" width="3" height="3" fill="none" stroke="#333" stroke-width="0.8"/>
<text x="869" y="175" font-size="7" font-weight="normal" text-anchor="start" fill="#444">XDA3</text>
<text x="103" y="40.5" font-size="7.2" font-weight="bold" text-anchor="start" fill="#2a2a2a">C1</text>
<text x="103" y="48.5" font-size="7.2" font-weight="bold" text-anchor="start" fill="#2a2a2a">220µF</text>
<text x="209" y="23.5" font-size="7.2" font-weight="bold" text-anchor="start" fill="#2a2a2a">R26</text>
<text x="209" y="39" font-size="7.2" font-weight="bold" text-anchor="start" fill="#2a2a2a">11kΩ</text>
<text x="151" y="61.5" font-size="7.2" font-weight="bold" text-anchor="start" fill="#2a2a2a">R11</text>
<text x="151" y="69.5" font-size="7.2" font-weight="bold" text-anchor="start" fill="#2a2a2a">22kΩ</text>
<text x="244" y="40.5" font-size="7.2" font-weight="bold" text-anchor="start" fill="#2a2a2a">R1</text>
<text x="244" y="49" font-size="7.2" font-weight="bold" text-anchor="start" fill="#2a2a2a">22kΩ</text>
<text x="306" y="40.5" font-size="7.2" font-weight="bold" text-anchor="start" fill="#2a2a2a">R2</text>
<text x="306" y="49" font-size="7.2" font-weight="bold" text-anchor="start" fill="#2a2a2a">22kΩ</text>
<text x="369" y="35.5" font-size="7.2" font-weight="bold" text-anchor="start" fill="#2a2a2a">C8</text>
<text x="369" y="44" font-size="7.2" font-weight="bold" text-anchor="start" fill="#2a2a2a">220µF</text>
<text x="395" y="23.5" font-size="7.2" font-weight="bold" text-anchor="start" fill="#2a2a2a">R36</text>
<text x="393" y="39" font-size="7.2" font-weight="bold" text-anchor="start" fill="#2a2a2a">2kΩ</text>
<text x="443" y="22.5" font-size="7.2" font-weight="bold" text-anchor="start" fill="#2a2a2a">V5</text>
<text x="443" y="31" font-size="7.2" font-weight="bold" text-anchor="start" fill="#2a2a2a">330 V</text>
<text x="165" y="102.5" font-size="7.2" font-weight="bold" text-anchor="start" fill="#2a2a2a">C4</text>
<text x="162" y="124" font-size="7.2" font-weight="bold" text-anchor="start" fill="#2a2a2a">0.22µF</text>
<text x="421" y="57" font-size="7.2" font-weight="bold" text-anchor="start" fill="#2a2a2a">C9</text>
<text x="420" y="77.5" font-size="7.2" font-weight="bold" text-anchor="start" fill="#2a2a2a">1µF</text>
<text x="405" y="102" font-size="7.2" font-weight="bold" text-anchor="start" fill="#2a2a2a">C3</text>
<text x="403" y="124" font-size="7.2" font-weight="bold" text-anchor="start" fill="#2a2a2a">1µF</text>
<text x="445" y="77" font-size="7.2" font-weight="bold" text-anchor="start" fill="#2a2a2a">R37</text>
<text x="445" y="85.5" font-size="7.2" font-weight="bold" text-anchor="start" fill="#2a2a2a">150kΩ</text>
<text x="448" y="120.5" font-size="7.2" font-weight="bold" text-anchor="start" fill="#2a2a2a">V3</text>
<text x="447" y="129.5" font-size="7.2" font-weight="bold" text-anchor="start" fill="#2a2a2a">-53 V</text>
<text x="533" y="45.5" font-size="7.2" font-weight="bold" text-anchor="start" fill="#2a2a2a">R16</text>
<text x="533" y="54" font-size="7.2" font-weight="bold" text-anchor="start" fill="#2a2a2a">1kΩ</text>
<text x="595" y="45.5" font-size="7.2" font-weight="bold" text-anchor="start" fill="#2a2a2a">R12</text>
<text x="595" y="54" font-size="7.2" font-weight="bold" text-anchor="start" fill="#2a2a2a">1kΩ</text>
<text x="577" y="67" font-size="7.2" font-weight="bold" text-anchor="start" fill="#2a2a2a">U3</text>
<text x="633" y="67" font-size="7.2" font-weight="bold" text-anchor="start" fill="#2a2a2a">U5</text>
<text x="543" y="94" font-size="7.2" font-weight="bold" text-anchor="start" fill="#2a2a2a">6S33S</text>
<text x="599" y="94" font-size="7.2" font-weight="bold" text-anchor="start" fill="#2a2a2a">6S33S</text>
<text x="533" y="103" font-size="7.2" font-weight="bold" text-anchor="start" fill="#2a2a2a">R22</text>
<text x="533" y="111.5" font-size="7.2" font-weight="bold" text-anchor="start" fill="#2a2a2a">3Ω</text>
<text x="588" y="108" font-size="7.2" font-weight="bold" text-anchor="start" fill="#2a2a2a">R27</text>
<text x="588" y="116.5" font-size="7.2" font-weight="bold" text-anchor="start" fill="#2a2a2a">3Ω</text>
<text x="557" y="139" font-size="7.2" font-weight="bold" text-anchor="start" fill="#2a2a2a">R21</text>
<text x="557" y="147.5" font-size="7.2" font-weight="bold" text-anchor="start" fill="#2a2a2a">3Ω</text>
<text x="614" y="139" font-size="7.2" font-weight="bold" text-anchor="start" fill="#2a2a2a">R20</text>
<text x="614" y="147.5" font-size="7.2" font-weight="bold" text-anchor="start" fill="#2a2a2a">3Ω</text>
<text x="528" y="175" font-size="7.2" font-weight="bold" text-anchor="start" fill="#2a2a2a">R17</text>
<text x="528" y="183.5" font-size="7.2" font-weight="bold" text-anchor="start" fill="#2a2a2a">1kΩ</text>
<text x="589" y="175" font-size="7.2" font-weight="bold" text-anchor="start" fill="#2a2a2a">R18</text>
<text x="589" y="183.5" font-size="7.2" font-weight="bold" text-anchor="start" fill="#2a2a2a">1kΩ</text>
<text x="573" y="196" font-size="7.2" font-weight="bold" text-anchor="start" fill="#2a2a2a">U4</text>
<text x="630" y="196" font-size="7.2" font-weight="bold" text-anchor="start" fill="#2a2a2a">U6</text>
<text x="538" y="222.5" font-size="7.2" font-weight="bold" text-anchor="start" fill="#2a2a2a">6S33S</text>
<text x="594" y="222.5" font-size="7.2" font-weight="bold" text-anchor="start" fill="#2a2a2a">6S33S</text>
<text x="496" y="216" font-size="7.2" font-weight="bold" text-anchor="start" fill="#2a2a2a">R3</text>
<text x="496" y="224.5" font-size="7.2" font-weight="bold" text-anchor="start" fill="#2a2a2a">150kΩ</text>
<text x="500" y="245" font-size="7.2" font-weight="bold" text-anchor="start" fill="#2a2a2a">V2</text>
<text x="499" y="253.5" font-size="7.2" font-weight="bold" text-anchor="start" fill="#2a2a2a">-53 V</text>
<text x="527" y="236" font-size="7.2" font-weight="bold" text-anchor="start" fill="#2a2a2a">R35</text>
<text x="527" y="244.5" font-size="7.2" font-weight="bold" text-anchor="start" fill="#2a2a2a">2Ω</text>
<text x="583" y="236" font-size="7.2" font-weight="bold" text-anchor="start" fill="#2a2a2a">R34</text>
<text x="583" y="244.5" font-size="7.2" font-weight="bold" text-anchor="start" fill="#2a2a2a">2Ω</text>
<text x="942" y="70" font-size="7.2" font-weight="bold" text-anchor="start" fill="#2a2a2a">V1</text>
<text x="942" y="78.5" font-size="7.2" font-weight="bold" text-anchor="start" fill="#2a2a2a">165 V</text>
<text x="900" y="40.5" font-size="7.2" font-weight="bold" text-anchor="start" fill="#2a2a2a">C6</text>
<text x="899" y="49" font-size="7.2" font-weight="bold" text-anchor="start" fill="#2a2a2a">3300µF</text>
<text x="942" y="192.5" font-size="7.2" font-weight="bold" text-anchor="start" fill="#2a2a2a">V4</text>
<text x="942" y="201" font-size="7.2" font-weight="bold" text-anchor="start" fill="#2a2a2a">165 V</text>
<text x="900" y="243" font-size="7.2" font-weight="bold" text-anchor="start" fill="#2a2a2a">C2</text>
<text x="899" y="251" font-size="7.2" font-weight="bold" text-anchor="start" fill="#2a2a2a">3300µF</text>
<text x="831" y="288" font-size="7.2" font-weight="bold" text-anchor="start" fill="#2a2a2a">R25</text>
<text x="830" y="296" font-size="7.2" font-weight="bold" text-anchor="start" fill="#2a2a2a">1.3kΩ</text>
<text x="864" y="288" font-size="7.2" font-weight="bold" text-anchor="start" fill="#2a2a2a">C10</text>
<text x="863" y="296" font-size="7.2" font-weight="bold" text-anchor="start" fill="#2a2a2a">220pF</text>
<text x="836" y="127" font-size="7.2" font-weight="bold" text-anchor="start" fill="#2a2a2a">R10</text>
<text x="833" y="143" font-size="7.2" font-weight="bold" text-anchor="start" fill="#2a2a2a">8Ω</text>
<text x="833" y="151.5" font-size="7.2" font-weight="bold" text-anchor="start" fill="#2a2a2a">LOAD</text>
<text x="121" y="210.5" font-size="7.2" font-weight="bold" text-anchor="start" fill="#2a2a2a">R23</text>
<text x="121" y="218.5" font-size="7.2" font-weight="bold" text-anchor="start" fill="#2a2a2a">470Ω</text>
<text x="153" y="210.5" font-size="7.2" font-weight="bold" text-anchor="start" fill="#2a2a2a">C7</text>
<text x="153" y="218.5" font-size="7.2" font-weight="bold" text-anchor="start" fill="#2a2a2a">470µF</text>
<text x="90" y="220.5" font-size="7.2" font-weight="bold" text-anchor="start" fill="#2a2a2a">R24</text>
<text x="90" y="229" font-size="7.2" font-weight="bold" text-anchor="start" fill="#2a2a2a">300kΩ</text>
<text x="121" y="246.5" font-size="7.2" font-weight="bold" text-anchor="start" fill="#2a2a2a">R4</text>
<text x="121" y="254.5" font-size="7.2" font-weight="bold" text-anchor="start" fill="#2a2a2a">47Ω</text>
<text x="275" y="216" font-size="7.2" font-weight="bold" text-anchor="start" fill="#2a2a2a">R6</text>
<text x="275" y="224" font-size="7.2" font-weight="bold" text-anchor="start" fill="#2a2a2a">300Ω</text>
<text x="380" y="123.5" font-size="7.2" font-weight="bold" text-anchor="start" fill="#2a2a2a">C5</text>
<text x="380" y="131.5" font-size="7.2" font-weight="bold" text-anchor="start" fill="#2a2a2a">3.3µF</text>
<text x="378" y="160" font-size="7.2" font-weight="bold" text-anchor="start" fill="#2a2a2a">R8</text>
<text x="378" y="168" font-size="7.2" font-weight="bold" text-anchor="start" fill="#2a2a2a">430kΩ</text>
<text x="193" y="148.5" font-size="7.2" font-weight="bold" text-anchor="start" fill="#2a2a2a">R5</text>
<text x="193" y="156.5" font-size="7.2" font-weight="bold" text-anchor="start" fill="#2a2a2a">470kΩ</text>
<text x="165" y="144.5" font-size="7.2" font-weight="bold" text-anchor="start" fill="#2a2a2a">U13</text>
<text x="130" y="171" font-size="7.2" font-weight="bold" text-anchor="start" fill="#2a2a2a">6J9P_T</text>
<text x="240" y="129.5" font-size="7.2" font-weight="bold" text-anchor="middle" fill="#2a2a2a">U1</text>
<text x="240" y="139.5" font-size="7.2" font-weight="bold" text-anchor="middle" fill="#2a2a2a">6N1P</text>
<text x="302" y="129.5" font-size="7.2" font-weight="bold" text-anchor="middle" fill="#2a2a2a">U2</text>
<text x="302" y="139.5" font-size="7.2" font-weight="bold" text-anchor="middle" fill="#2a2a2a">6N1P</text>
<text x="61" y="95.8" font-size="7.2" font-weight="bold" text-anchor="middle" fill="#2a2a2a">R7</text>
<text x="56" y="105.8" font-size="7.2" font-weight="bold" text-anchor="middle" fill="#2a2a2a">10kΩ</text>
<text x="58.7" y="115" font-size="7.2" font-weight="bold" text-anchor="middle" fill="#2a2a2a">Key=Q</text>
<text x="60.8" y="125.8" font-size="7.2" font-weight="bold" text-anchor="middle" fill="#2a2a2a">100%</text>
<text x="354" y="200" font-size="7.2" font-weight="bold" text-anchor="middle" fill="#2a2a2a">R9</text>
<text x="350" y="209" font-size="7.2" font-weight="bold" text-anchor="middle" fill="#2a2a2a">20kΩ</text>
<text x="352" y="218" font-size="7.2" font-weight="bold" text-anchor="middle" fill="#2a2a2a">Key=D</text>
<text x="402" y="212" font-size="7.2" font-weight="bold" text-anchor="start" fill="#2a2a2a">58%</text>
<rect x="154" y="5" width="49" height="16" fill="#f7f4b4"/>
<text x="156" y="11.8" font-size="6.05" font-weight="normal" text-anchor="start" fill="#2a2a1a" stroke="#2a2a1a" stroke-width="0.12">V(dc): 253 V</text>
<text x="156" y="19.200000000000003" font-size="6.05" font-weight="normal" text-anchor="start" fill="#2a2a1a" stroke="#2a2a1a" stroke-width="0.12">I(dc): -4.39 mA</text>
<rect x="92" y="79" width="50" height="17" fill="#f7f4b4"/>
<text x="94" y="85.8" font-size="6.05" font-weight="normal" text-anchor="start" fill="#2a2a1a" stroke="#2a2a1a" stroke-width="0.12">V(dc): 157 V</text>
<text x="94" y="93.2" font-size="6.05" font-weight="normal" text-anchor="start" fill="#2a2a1a" stroke="#2a2a1a" stroke-width="0.12">I(dc): 4.37 mA</text>
<rect x="180" y="85" width="43" height="8" fill="#f7f4b4"/>
<text x="182" y="91.8" font-size="6.05" font-weight="normal" text-anchor="start" fill="#2a2a1a" stroke="#2a2a1a" stroke-width="0.12">V(p-p): 4.44 V</text>
<rect x="300" y="5" width="50" height="17" fill="#f7f4b4"/>
<text x="302" y="11.8" font-size="6.05" font-weight="normal" text-anchor="start" fill="#2a2a1a" stroke="#2a2a1a" stroke-width="0.12">V(dc): 301 V</text>
<text x="302" y="19.200000000000003" font-size="6.05" font-weight="normal" text-anchor="start" fill="#2a2a1a" stroke="#2a2a1a" stroke-width="0.12">I(dc): -14.3 mA</text>
<rect x="245" y="72" width="45" height="17" fill="#f7f4b4"/>
<text x="247" y="78.8" font-size="6.05" font-weight="normal" text-anchor="start" fill="#2a2a1a" stroke="#2a2a1a" stroke-width="0.12">V(dc): 194 V</text>
<text x="247" y="86.2" font-size="6.05" font-weight="normal" text-anchor="start" fill="#2a2a1a" stroke="#2a2a1a" stroke-width="0.12">I(dc): 4.84 mA</text>
<rect x="320" y="80" width="43" height="16" fill="#f7f4b4"/>
<text x="322" y="86.8" font-size="6.05" font-weight="normal" text-anchor="start" fill="#2a2a1a" stroke="#2a2a1a" stroke-width="0.12">V(dc): 191 V</text>
<text x="322" y="94.2" font-size="6.05" font-weight="normal" text-anchor="start" fill="#2a2a1a" stroke="#2a2a1a" stroke-width="0.12">I(dc): 5.04 mA</text>
<rect x="470" y="8" width="43" height="15" fill="#f7f4b4"/>
<text x="472" y="14.8" font-size="6.05" font-weight="normal" text-anchor="start" fill="#2a2a1a" stroke="#2a2a1a" stroke-width="0.12">V(p-p): 92.9 V</text>
<text x="472" y="22.200000000000003" font-size="6.05" font-weight="normal" text-anchor="start" fill="#2a2a1a" stroke="#2a2a1a" stroke-width="0.12">V(dc): -49.3 V</text>
<rect x="475" y="57" width="48" height="16" fill="#f7f4b4"/>
<text x="477" y="63.8" font-size="6.05" font-weight="normal" text-anchor="start" fill="#2a2a1a" stroke="#2a2a1a" stroke-width="0.12">V(dc): 2.53 V</text>
<text x="477" y="71.2" font-size="6.05" font-weight="normal" text-anchor="start" fill="#2a2a1a" stroke="#2a2a1a" stroke-width="0.12">I(dc): 413 mA</text>
<rect x="591" y="4" width="48" height="17" fill="#f7f4b4"/>
<text x="593" y="10.8" font-size="6.05" font-weight="normal" text-anchor="start" fill="#2a2a1a" stroke="#2a2a1a" stroke-width="0.12">V(dc): 165 V</text>
<text x="593" y="18.200000000000003" font-size="6.05" font-weight="normal" text-anchor="start" fill="#2a2a1a" stroke="#2a2a1a" stroke-width="0.12">I(dc): -413 mA</text>
<rect x="830" y="33" width="48" height="45" fill="#f7f4b4"/>
<text x="832" y="39.8" font-size="6.05" font-weight="normal" text-anchor="start" fill="#2a2a1a" stroke="#2a2a1a" stroke-width="0.12">V(p-p): 21.1 pV</text>
<text x="832" y="47.199999999999996" font-size="6.05" font-weight="normal" text-anchor="start" fill="#2a2a1a" stroke="#2a2a1a" stroke-width="0.12">V(rms): 0 V</text>
<text x="832" y="54.599999999999994" font-size="6.05" font-weight="normal" text-anchor="start" fill="#2a2a1a" stroke="#2a2a1a" stroke-width="0.12">I: -147 mA</text>
<text x="832" y="62.0" font-size="6.05" font-weight="normal" text-anchor="start" fill="#2a2a1a" stroke="#2a2a1a" stroke-width="0.12">I(p-p): 2.08 A</text>
<text x="832" y="69.4" font-size="6.05" font-weight="normal" text-anchor="start" fill="#2a2a1a" stroke="#2a2a1a" stroke-width="0.12">I(rms): 1.13 A</text>
<text x="832" y="76.8" font-size="6.05" font-weight="normal" text-anchor="start" fill="#2a2a1a" stroke="#2a2a1a" stroke-width="0.12">I(dc): -825 mA</text>
<rect x="124" y="176" width="49" height="16" fill="#f7f4b4"/>
<text x="126" y="182.8" font-size="6.05" font-weight="normal" text-anchor="start" fill="#2a2a1a" stroke="#2a2a1a" stroke-width="0.12">V(dc): 2.29 V</text>
<text x="126" y="190.20000000000002" font-size="6.05" font-weight="normal" text-anchor="start" fill="#2a2a1a" stroke="#2a2a1a" stroke-width="0.12">I(dc): 4.37 mA</text>
<rect x="216" y="164" width="46" height="17" fill="#f7f4b4"/>
<text x="218" y="170.8" font-size="6.05" font-weight="normal" text-anchor="start" fill="#2a2a1a" stroke="#2a2a1a" stroke-width="0.12">V(dc): 2.97 V</text>
<text x="218" y="178.20000000000002" font-size="6.05" font-weight="normal" text-anchor="start" fill="#2a2a1a" stroke="#2a2a1a" stroke-width="0.12">I(dc): 4.84 mA</text>
<rect x="280" y="164" width="46" height="17" fill="#f7f4b4"/>
<text x="282" y="170.8" font-size="6.05" font-weight="normal" text-anchor="start" fill="#2a2a1a" stroke="#2a2a1a" stroke-width="0.12">V(dc): 2.97 V</text>
<text x="282" y="178.20000000000002" font-size="6.05" font-weight="normal" text-anchor="start" fill="#2a2a1a" stroke="#2a2a1a" stroke-width="0.12">I(dc): 5.04 mA</text>
<rect x="376" y="142" width="46" height="10" fill="#f7f4b4"/>
<text x="378" y="148.8" font-size="6.05" font-weight="normal" text-anchor="start" fill="#2a2a1a" stroke="#2a2a1a" stroke-width="0.12">V(p-p): 1.78 V</text>
<rect x="533" y="113" width="48" height="16" fill="#f7f4b4"/>
<text x="535" y="119.8" font-size="6.05" font-weight="normal" text-anchor="start" fill="#2a2a1a" stroke="#2a2a1a" stroke-width="0.12">V(dc): 1.29 V</text>
<text x="535" y="127.2" font-size="6.05" font-weight="normal" text-anchor="start" fill="#2a2a1a" stroke="#2a2a1a" stroke-width="0.12">I(dc): 413 mA</text>
<rect x="431" y="174" width="48" height="17" fill="#f7f4b4"/>
<text x="433" y="180.8" font-size="6.05" font-weight="normal" text-anchor="start" fill="#2a2a1a" stroke="#2a2a1a" stroke-width="0.12">V(p-p): 57.8 V</text>
<text x="433" y="188.20000000000002" font-size="6.05" font-weight="normal" text-anchor="start" fill="#2a2a1a" stroke="#2a2a1a" stroke-width="0.12">V(dc): -219 V</text>
<rect x="773" y="115" width="39" height="10" fill="#f7f4b4"/>
<text x="775" y="121.8" font-size="6.05" font-weight="normal" text-anchor="start" fill="#2a2a1a" stroke="#2a2a1a" stroke-width="0.12">V(p-p): 30.6 V</text>
<rect x="603" y="230" width="43" height="18" fill="#f7f4b4"/>
<text x="605" y="236.8" font-size="6.05" font-weight="normal" text-anchor="start" fill="#2a2a1a" stroke="#2a2a1a" stroke-width="0.12">V(dc): -164 V</text>
<text x="605" y="244.20000000000002" font-size="6.05" font-weight="normal" text-anchor="start" fill="#2a2a1a" stroke="#2a2a1a" stroke-width="0.12">I(dc): 332 mA</text>
<rect x="832" y="213" width="50" height="45" fill="#f7f4b4"/>
<text x="834" y="219.8" font-size="6.05" font-weight="normal" text-anchor="start" fill="#2a2a1a" stroke="#2a2a1a" stroke-width="0.12">V(p-p): 21.1 pV</text>
<text x="834" y="227.20000000000002" font-size="6.05" font-weight="normal" text-anchor="start" fill="#2a2a1a" stroke="#2a2a1a" stroke-width="0.12">V(rms): 0 V</text>
<text x="834" y="234.60000000000002" font-size="6.05" font-weight="normal" text-anchor="start" fill="#2a2a1a" stroke="#2a2a1a" stroke-width="0.12">I: 959 mA</text>
<text x="834" y="242.0" font-size="6.05" font-weight="normal" text-anchor="start" fill="#2a2a1a" stroke="#2a2a1a" stroke-width="0.12">I(p-p): 1.76 A</text>
<text x="834" y="249.4" font-size="6.05" font-weight="normal" text-anchor="start" fill="#2a2a1a" stroke="#2a2a1a" stroke-width="0.12">I(rms): 922 mA</text>
<text x="834" y="256.8" font-size="6.05" font-weight="normal" text-anchor="start" fill="#2a2a1a" stroke="#2a2a1a" stroke-width="0.12">I(dc): 663 mA</text>
</g></svg>
<div class="a" style="left:45px;top:484px;width:955px;height:13px;background:#f0f0f0;border-bottom:1px solid #c4c4c4"></div>
<div class="a" style="left:54px;top:487px;width:846px;height:8px;background:#c9c9c9"></div>
<div class="t" style="left:47px;top:485.5px;font-size:6.3px;color:#555;">&lt;</div>
<div class="t" style="left:990px;top:484px;font-size:10px;color:#555;">&#x203A;</div>
<div class="a" style="left:43px;top:497px;width:957px;height:17px;background:#f0f0f0;border-bottom:1px solid #bbb"></div>
<div class="a" style="left:44px;top:497px;width:96px;height:15px;background:#fff;border:1px solid #c0c0c0;border-top:none"></div>
<svg class="a" style="left:45px;top:499px" width="11" height="12"><path d="M1,1 H7 L10,4 V11 H1 Z" fill="#fff" stroke="#555"/><rect x="2.5" y="5" width="5" height="4" fill="#a55" /></svg>
<div class="t" style="left:57px;top:500px;font-size:7.2px;color:#2e2e2e;">1. ОТЛ X-X 10 шт (+330в) двуполярное</div>
<div class="a" style="left:990px;top:510px;width:10px;height:1px;background:#333"></div>
<div class="t" style="left:993px;top:500px;font-size:6px;color:#222;">&#9664;</div>
<div class="a" style="left:0px;top:511px;width:1000px;height:8px;background:#ececec;border-top:1px solid #b0b0b0"></div>
<div class="a" style="left:0px;top:519px;width:1000px;height:26px;background:#fff;border-bottom:2px solid #9a9a9a;border-top:1px solid #d8d8d8"></div>
<div class="t" style="left:-2px;top:521px;font-size:6.5px;color:#2e2e2e;">перечня соединений SPICE для 1. ОТЛ X-X 10 шт (+330в) двуполярное пит.</div>
<div class="t" style="left:-4px;top:532px;font-size:6.5px;color:#2e2e2e;">нений SPICE: предупреждение по обозначению</div>
<div class="a" style="left:0px;top:545px;width:1000px;height:13px;background:#f0f0f0"></div>
<div class="a" style="left:0px;top:546px;width:7px;height:10px;background:#f0f0f0;border:1px solid #b8b8b8"></div>
<div class="t" style="left:0px;top:546px;font-size:6.4px;color:#2e2e2e;">и</div>
<div class="a" style="left:8px;top:546px;width:42px;height:10px;background:#f0f0f0;border:1px solid #b8b8b8"></div>
<div class="t" style="left:10px;top:546px;font-size:6.4px;color:#2e2e2e;">Компоненты</div>
<div class="a" style="left:52px;top:546px;width:31px;height:10px;background:#f0f0f0;border:1px solid #b8b8b8"></div>
<div class="t" style="left:54px;top:546px;font-size:6.4px;color:#2e2e2e;">Слои PCB</div>
<div class="a" style="left:85px;top:547px;width:55px;height:11px;background:#fafafa;border:1px solid #b8b8b8;border-top:none"></div>
<div class="t" style="left:87px;top:547.5px;font-size:6.4px;color:#222;">Моделирование</div>
<div class="a" style="left:0px;top:558px;width:1000px;height:1px;background:#d8d8d8"></div>
<div class="a" style="left:0px;top:559px;width:1000px;height:11px;background:#f0f0f0"></div>
<div class="t" style="left:799px;top:562px;font-size:6.3px;color:#222;">двуполярное пит. Время раб: 0.598 s</div>
<div class="a" style="left:992px;top:560px;width:8px;height:10px;border:1px solid #aaa;background:#e8e8e8"></div>
<div class="a" style="left:-2px;top:320px;width:130px;height:136px;background:#f0f0f0;border:1px solid #c4c4c4;box-shadow:1px 1px 4px rgba(0,0,0,.3)"></div>
<div class="a" style="left:-1px;top:321px;width:128px;height:17px;background:#fff"></div>
<svg class="a" style="left:5px;top:325px" width="11" height="8"><polygon points="0,4 5,0 11,1 6,7" fill="#4b4b7d"/><polygon points="5,0 11,1 8,3" fill="#7a7ab0"/></svg>
<div class="t" style="left:17px;top:324px;font-size:6.7px;color:#a0a0a0;">Функциональный генерато...</div>
<svg class="a" style="left:114px;top:324.5px" width="10" height="10"><path d="M1.5,1.5 L8.5,8.5 M8.5,1.5 L1.5,8.5" stroke="#b4b4b4" stroke-width="1"/></svg>
<div class="a" style="left:1px;top:339px;width:125px;height:91px;border:1px solid #dcdcdc"></div>
<div class="t" style="left:6px;top:338px;font-size:6.3px;color:#2e2e2e;">Форма сигнала</div>
<div class="a" style="left:9px;top:348px;width:35px;height:9px;background:#cce4f7;border:1px solid #3c7fb1;font-size:6.3px;color:#222;text-align:center;line-height:7px;white-space:nowrap;overflow:hidden"></div>
<div class="a" style="left:47px;top:348px;width:35px;height:9px;background:#e1e1e1;border:1px solid #adadad;font-size:6.3px;color:#222;text-align:center;line-height:7px;white-space:nowrap;overflow:hidden"></div>
<div class="a" style="left:85px;top:348px;width:35px;height:9px;background:#e1e1e1;border:1px solid #adadad;font-size:6.3px;color:#222;text-align:center;line-height:7px;white-space:nowrap;overflow:hidden"></div>
<svg class="a" style="left:9px;top:348px" width="112" height="10"><path d="M5,5 Q12,1 17,5 Q23,9 30,5" fill="none" stroke="#333" stroke-width="1"/><path d="M50,6 L56,3 L62,6 L68,3 L74,6" fill="none" stroke="#444" stroke-width="0.9"/><path d="M81,7 H85 V3 H91 V7 H95 V3 H101 V7 H105" fill="none" stroke="#333" stroke-width="1"/></svg>
<div class="t" style="left:6px;top:358px;font-size:6.3px;color:#2e2e2e;">Параметры сигнала</div>
<div class="t" style="left:8.5px;top:369px;font-size:6.3px;color:#2e2e2e;">Частота</div>
<div class="a" style="left:55px;top:368.5px;width:42px;height:11.0px;background:#fff;border:1px solid #a8a8a8;font-size:6.3px;color:#222;text-align:left;padding-left:3px;line-height:9.0px;white-space:nowrap;overflow:hidden">1</div>
<div class="a" style="left:97px;top:368.5px;width:25px;height:11.0px;background:#fff;border:1px solid #a8a8a8;font-size:6.3px;color:#222;text-align:left;padding-left:3px;line-height:9.0px;white-space:nowrap;overflow:hidden">kHz</div>
<div class="t" style="left:8.5px;top:380.5px;font-size:6.3px;color:#2e2e2e;">Длительность</div>
<div class="t" style="left:58px;top:380.5px;font-size:6.3px;color:#b0b0b0;">50</div>
<div class="t" style="left:104px;top:380.5px;font-size:6.3px;color:#b0b0b0;">%</div>
<div class="a" style="left:96px;top:380px;width:1px;height:11px;background:#ddd"></div>
<div class="t" style="left:8.5px;top:391.5px;font-size:6.3px;color:#2e2e2e;">Амплитуда</div>
<div class="a" style="left:55px;top:391.0px;width:42px;height:11.0px;background:#fff;border:1px solid #a8a8a8;font-size:6.3px;color:#222;text-align:left;padding-left:3px;line-height:9.0px;white-space:nowrap;overflow:hidden">600</div>
<div class="a" style="left:97px;top:391.0px;width:25px;height:11.0px;background:#fff;border:1px solid #a8a8a8;font-size:6.3px;color:#222;text-align:left;padding-left:3px;line-height:9.0px;white-space:nowrap;overflow:hidden">mVp</div>
<div class="t" style="left:8.5px;top:402.3px;font-size:6.3px;color:#2e2e2e;">Смещение</div>
<div class="a" style="left:55px;top:401.8px;width:42px;height:11.0px;background:#fff;border:1px solid #a8a8a8;font-size:6.3px;color:#222;text-align:left;padding-left:3px;line-height:9.0px;white-space:nowrap;overflow:hidden">0</div>
<div class="a" style="left:97px;top:401.8px;width:25px;height:11.0px;background:#fff;border:1px solid #a8a8a8;font-size:6.3px;color:#222;text-align:left;padding-left:3px;line-height:9.0px;white-space:nowrap;overflow:hidden">V</div>
<div class="a" style="left:25px;top:416px;width:74px;height:12px;background:#cccccc;border:1px solid #bfbfbf;font-size:6.3px;color:#a0a0a0;text-align:center;line-height:10px;white-space:nowrap;overflow:hidden">Фронт/Спад</div>
<div class="t" style="left:13px;top:435px;font-size:10px;color:#2e2e2e;">+</div>
<div class="t" style="left:17.0px;top:433px;width:80px;text-align:center;font-size:6.3px;color:#2e2e2e;">Общий</div>
<div class="t" style="left:109px;top:436px;font-size:10px;color:#2e2e2e;">&#8211;</div>
<div class="a" style="left:11px;top:443px;width:9px;height:9px;border-radius:50%;border:1px solid #ccc;background:#eee"></div>
<div class="a" style="left:14px;top:446px;width:3px;height:3px;border-radius:50%;background:#c8c8c8"></div>
<div class="a" style="left:51px;top:443px;width:9px;height:9px;border-radius:50%;border:1px solid #ccc;background:#eee"></div>
<div class="a" style="left:54px;top:446px;width:3px;height:3px;border-radius:50%;background:#c8c8c8"></div>
<div class="a" style="left:107px;top:443px;width:9px;height:9px;border-radius:50%;border:1px solid #ccc;background:#fff"></div>
<svg class="a" style="left:120px;top:448px" width="7" height="7"><g fill="#b8b8b8"><rect x="5" y="1" width="1.2" height="1.2"/><rect x="3" y="3" width="1.2" height="1.2"/><rect x="5" y="3" width="1.2" height="1.2"/><rect x="1" y="5" width="1.2" height="1.2"/><rect x="3" y="5" width="1.2" height="1.2"/><rect x="5" y="5" width="1.2" height="1.2"/></g></svg>
<div class="a" style="left:135px;top:320px;width:332px;height:255px;background:#f0f0f0;border:1px solid #b8b8b8"></div>
<div class="a" style="left:136px;top:321px;width:330px;height:17.5px;background:#fff"></div>
<svg class="a" style="left:140px;top:325px" width="11" height="8"><polygon points="0,4 5,0 11,1 6,7" fill="#4b4b7d"/><polygon points="5,0 11,1 8,3" fill="#7a7ab0"/></svg>
<div class="t" style="left:152px;top:324px;font-size:6.7px;color:#9a9a9a;">Осциллограф-XSC1</div>
<svg class="a" style="left:453.5px;top:324.5px" width="10" height="10"><path d="M1.5,1.5 L8.5,8.5 M8.5,1.5 L1.5,8.5" stroke="#b4b4b4" stroke-width="1"/></svg>
<div class="a" style="left:136px;top:338.5px;width:330px;height:142.0px;background:#000"></div>
<svg class="a" style="left:135px;top:338px" width="332" height="143"><line x1="39.4" y1="7" x2="39.4" y2="137.60000000000002" stroke="#b4b4b4" stroke-width="1" stroke-dasharray="1.6,2.2"/><line x1="71.2" y1="7" x2="71.2" y2="137.60000000000002" stroke="#b4b4b4" stroke-width="1" stroke-dasharray="1.6,2.2"/><line x1="103.0" y1="7" x2="103.0" y2="137.60000000000002" stroke="#b4b4b4" stroke-width="1" stroke-dasharray="1.6,2.2"/><line x1="134.8" y1="7" x2="134.8" y2="137.60000000000002" stroke="#b4b4b4" stroke-width="1" stroke-dasharray="1.6,2.2"/><line x1="166.5" y1="7" x2="166.5" y2="137.60000000000002" stroke="#b4b4b4" stroke-width="1" stroke-dasharray="1.6,2.2"/><line x1="198.3" y1="7" x2="198.3" y2="137.60000000000002" stroke="#b4b4b4" stroke-width="1" stroke-dasharray="1.6,2.2"/><line x1="230.1" y1="7" x2="230.1" y2="137.60000000000002" stroke="#b4b4b4" stroke-width="1" stroke-dasharray="1.6,2.2"/><line x1="261.9" y1="7" x2="261.9" y2="137.60000000000002" stroke="#b4b4b4" stroke-width="1" stroke-dasharray="1.6,2.2"/><line x1="293.7" y1="7" x2="293.7" y2="137.60000000000002" stroke="#b4b4b4" stroke-width="1" stroke-dasharray="1.6,2.2"/><line x1="7.599999999999994" y1="28.8" x2="325.5" y2="28.8" stroke="#b4b4b4" stroke-width="1" stroke-dasharray="1.6,2.2"/><line x1="7.599999999999994" y1="50.5" x2="325.5" y2="50.5" stroke="#b4b4b4" stroke-width="1" stroke-dasharray="1.6,2.2"/><line x1="7.599999999999994" y1="72.3" x2="325.5" y2="72.3" stroke="#e4e4e4" stroke-width="1.3" stroke-dasharray="3.2,1"/><line x1="7.599999999999994" y1="94.1" x2="325.5" y2="94.1" stroke="#b4b4b4" stroke-width="1" stroke-dasharray="1.6,2.2"/><line x1="7.599999999999994" y1="115.8" x2="325.5" y2="115.8" stroke="#b4b4b4" stroke-width="1" stroke-dasharray="1.6,2.2"/><line x1="7.599999999999994" y1="7" x2="325.5" y2="7" stroke="#8a8a8a" stroke-width="1.5"/><line x1="7.599999999999994" y1="137.60000000000002" x2="325.5" y2="137.60000000000002" stroke="#8a8a8a" stroke-width="1.5"/><polyline points="7.6,52.3 8.6,52.4 9.6,52.7 10.6,53.2 11.6,53.8 12.6,54.7 13.6,55.7 14.6,56.9 15.6,58.2 16.6,59.7 17.6,61.3 18.6,63.0 19.6,64.8 20.6,66.7 21.6,68.6 22.6,70.5 23.6,72.5 24.6,74.5 25.6,76.4 26.6,78.3 27.6,80.2 28.6,82.0 29.6,83.6 30.6,85.2 31.6,86.7 32.6,88.0 33.6,89.1 34.6,90.1 35.6,90.9 36.6,91.5 37.6,92.0 38.6,92.2 39.6,92.3 40.6,92.2 41.6,91.8 42.6,91.3 43.6,90.6 44.6,89.7 45.6,88.7 46.6,87.4 47.6,86.1 48.6,84.6 49.6,83.0 50.6,81.2 51.6,79.4 52.6,77.5 53.6,75.6 54.6,73.7 55.6,71.7 56.6,69.7 57.6,67.8 58.6,65.9 59.6,64.0 60.6,62.3 61.6,60.6 62.6,59.1 63.6,57.7 64.6,56.4 65.6,55.3 66.6,54.3 67.6,53.5 68.6,52.9 69.6,52.5 70.6,52.3 71.6,52.3 72.6,52.5 73.6,52.9 74.6,53.4 75.6,54.2 76.6,55.1 77.6,56.2 78.6,57.4 79.6,58.8 80.6,60.4 81.6,62.0 82.6,63.7 83.6,65.6 84.6,67.5 85.6,69.4 86.6,71.4 87.6,73.3 88.6,75.3 89.6,77.2 90.6,79.1 91.6,80.9 92.6,82.7 93.6,84.3 94.6,85.8 95.6,87.2 96.6,88.5 97.6,89.5 98.6,90.5 99.6,91.2 100.6,91.8 101.6,92.1 102.6,92.3 103.6,92.3 104.6,92.0 105.6,91.6 106.6,91.0 107.6,90.2 108.6,89.3 109.6,88.2 110.6,86.9 111.6,85.5 112.6,83.9 113.6,82.2 114.6,80.5 115.6,78.6 116.6,76.7 117.6,74.8 118.6,72.8 119.6,70.8 120.6,68.9 121.6,67.0 122.6,65.1 123.6,63.3 124.6,61.6 125.6,59.9 126.6,58.5 127.6,57.1 128.6,55.9 129.6,54.8 130.6,54.0 131.6,53.3 132.6,52.8 133.6,52.4 134.6,52.3 135.6,52.4 136.6,52.6 137.6,53.1 138.6,53.7 139.6,54.5 140.6,55.5 141.6,56.7 142.6,58.0 143.6,59.5 144.6,61.0 145.6,62.7 146.6,64.5 147.6,66.4 148.6,68.3 149.6,70.2 150.6,72.2 151.6,74.2 152.6,76.1 153.6,78.0 154.6,79.9 155.6,81.7 156.6,83.4 157.6,85.0 158.6,86.4 159.6,87.8 160.6,88.9 161.6,90.0 162.6,90.8 163.6,91.5 164.6,91.9 165.6,92.2 166.6,92.3 167.6,92.2 168.6,91.9 169.6,91.4 170.6,90.7 171.6,89.9 172.6,88.8 173.6,87.6 174.6,86.3 175.6,84.8 176.6,83.2 177.6,81.5 178.6,79.7 179.6,77.8 180.6,75.9 181.6,74.0 182.6,72.0 183.6,70.0 184.6,68.1 185.6,66.2 186.6,64.3 187.6,62.5 188.6,60.9 189.6,59.3 190.6,57.9 191.6,56.6 192.6,55.4 193.6,54.5 194.6,53.7 195.6,53.0 196.6,52.6 197.6,52.4 198.6,52.3 199.6,52.5 200.6,52.8 201.6,53.3 202.6,54.0 203.6,54.9 204.6,56.0 205.6,57.2 206.6,58.6 207.6,60.1 208.6,61.7 209.6,63.5 210.6,65.3 211.6,67.2 212.6,69.1 213.6,71.0 214.6,73.0 215.6,75.0 216.6,76.9 217.6,78.8 218.6,80.7 219.6,82.4 220.6,84.1 221.6,85.6 222.6,87.0 223.6,88.3 224.6,89.4 225.6,90.3 226.6,91.1 227.6,91.7 228.6,92.1 229.6,92.3" fill="none" stroke="#963838" stroke-width="1"/><polyline points="7.6,84.8 8.6,84.7 9.6,84.6 10.6,84.3 11.6,83.8 12.6,83.3 13.6,82.7 14.6,81.9 15.6,81.1 16.6,80.2 17.6,79.2 18.6,78.1 19.6,77.0 20.6,75.8 21.6,74.6 22.6,73.4 23.6,72.2 24.6,70.9 25.6,69.7 26.6,68.5 27.6,67.4 28.6,66.3 29.6,65.2 30.6,64.2 31.6,63.3 32.6,62.5 33.6,61.8 34.6,61.2 35.6,60.7 36.6,60.3 37.6,60.0 38.6,59.8 39.6,59.8 40.6,59.9 41.6,60.1 42.6,60.4 43.6,60.9 44.6,61.4 45.6,62.1 46.6,62.8 47.6,63.7 48.6,64.6 49.6,65.6 50.6,66.7 51.6,67.8 52.6,69.0 53.6,70.2 54.6,71.5 55.6,72.7 56.6,73.9 57.6,75.1 58.6,76.3 59.6,77.5 60.6,78.6 61.6,79.6 62.6,80.6 63.6,81.5 64.6,82.2 65.6,82.9 66.6,83.5 67.6,84.0 68.6,84.4 69.6,84.6 70.6,84.8 71.6,84.8 72.6,84.7 73.6,84.4 74.6,84.1 75.6,83.6 76.6,83.0 77.6,82.4 78.6,81.6 79.6,80.7 80.6,79.8 81.6,78.7 82.6,77.6 83.6,76.5 84.6,75.3 85.6,74.1 86.6,72.9 87.6,71.7 88.6,70.4 89.6,69.2 90.6,68.0 91.6,66.9 92.6,65.8 93.6,64.8 94.6,63.8 95.6,63.0 96.6,62.2 97.6,61.5 98.6,60.9 99.6,60.5 100.6,60.1 101.6,59.9 102.6,59.8 103.6,59.8 104.6,60.0 105.6,60.2 106.6,60.6 107.6,61.1 108.6,61.7 109.6,62.4 110.6,63.2 111.6,64.1 112.6,65.0 113.6,66.1 114.6,67.2 115.6,68.3 116.6,69.5 117.6,70.7 118.6,72.0 119.6,73.2 120.6,74.4 121.6,75.6 122.6,76.8 123.6,77.9 124.6,79.0 125.6,80.0 126.6,81.0 127.6,81.8 128.6,82.6 129.6,83.2 130.6,83.8 131.6,84.2 132.6,84.5 133.6,84.7 134.6,84.8 135.6,84.8 136.6,84.6 137.6,84.3 138.6,83.9 139.6,83.4 140.6,82.8 141.6,82.1 142.6,81.2 143.6,80.3 144.6,79.3 145.6,78.3 146.6,77.2 147.6,76.0 148.6,74.8 149.6,73.6 150.6,72.4 151.6,71.1 152.6,69.9 153.6,68.7 154.6,67.5 155.6,66.4 156.6,65.4 157.6,64.4 158.6,63.5 159.6,62.6 160.6,61.9 161.6,61.3 162.6,60.7 163.6,60.3 164.6,60.0 165.6,59.9 166.6,59.8 167.6,59.9 168.6,60.1 169.6,60.4 170.6,60.8 171.6,61.3 172.6,62.0 173.6,62.7 174.6,63.6 175.6,64.5 176.6,65.5 177.6,66.5 178.6,67.7 179.6,68.8 180.6,70.0 181.6,71.3 182.6,72.5 183.6,73.7 184.6,74.9 185.6,76.1 186.6,77.3 187.6,78.4 188.6,79.4 189.6,80.4 190.6,81.3 191.6,82.1 192.6,82.8 193.6,83.5 194.6,84.0 195.6,84.3 196.6,84.6 197.6,84.8 198.6,84.8 199.6,84.7 200.6,84.5 201.6,84.2 202.6,83.7 203.6,83.1 204.6,82.5 205.6,81.7 206.6,80.9 207.6,79.9 208.6,78.9 209.6,77.8 210.6,76.7 211.6,75.5 212.6,74.3 213.6,73.1 214.6,71.8 215.6,70.6 216.6,69.4 217.6,68.2 218.6,67.1 219.6,66.0 220.6,64.9 221.6,64.0 222.6,63.1 223.6,62.3 224.6,61.6 225.6,61.0 226.6,60.6 227.6,60.2 228.6,59.9 229.6,59.8" fill="none" stroke="#963838" stroke-width="1"/><line x1="7.599999999999994" y1="7" x2="7.599999999999994" y2="137.60000000000002" stroke="#742a2a" stroke-width="1"/><line x1="325.5" y1="7" x2="325.5" y2="137.60000000000002" stroke="#1c1c64" stroke-width="1.6"/><polygon points="3.5999999999999943,2 11.599999999999994,2 7.599999999999994,7" fill="#5fc8c8"/><polygon points="321.5,2 329.5,2 325.5,7" fill="#d8d890"/></svg>
<div class="t" style="left:139px;top:480.5px;font-size:6.3px;color:#555;">&lt;</div>
<div class="a" style="left:447px;top:482px;width:9px;height:8px;background:#d0d0d0"></div>
<div class="t" style="left:461px;top:480px;font-size:11px;color:#555;">&#x203A;</div>
<div class="t" style="left:139px;top:496px;font-size:6.3px;color:#2e2e2e;">T1</div>
<div class="t" style="left:139px;top:503.5px;font-size:6.3px;color:#2e2e2e;">T2</div>
<div class="t" style="left:139px;top:514.5px;font-size:6.3px;color:#2e2e2e;">T2-T1</div>
<div class="a" style="left:151px;top:496px;width:8.5px;height:8px;background:#e4e4e4;border:1px solid #d4d4d4"></div>
<div class="a" style="left:160.5px;top:496px;width:7.5px;height:8px;background:#e4e4e4;border:1px solid #d4d4d4"></div>
<svg class="a" style="left:151px;top:496px" width="18" height="8"><path d="M2,4 L5,1.2 V3 H7 V5 H5 V6.8 Z" fill="#111"/><path d="M15.5,4 L12.5,1.2 V3 H10.5 V5 H12.5 V6.8 Z" fill="#111"/></svg>
<div class="a" style="left:151px;top:504px;width:8.5px;height:8px;background:#e4e4e4;border:1px solid #d4d4d4"></div>
<div class="a" style="left:160.5px;top:504px;width:7.5px;height:8px;background:#e4e4e4;border:1px solid #d4d4d4"></div>
<svg class="a" style="left:151px;top:504px" width="18" height="8"><path d="M2,4 L5,1.2 V3 H7 V5 H5 V6.8 Z" fill="#111"/><path d="M15.5,4 L12.5,1.2 V3 H10.5 V5 H12.5 V6.8 Z" fill="#111"/></svg>
<div class="a" style="left:136px;top:492px;width:34px;height:31px;border-right:1px solid #d8d8d8;border-bottom:1px solid #d8d8d8"></div>
<div class="a" style="left:170.5px;top:492px;width:206.0px;height:31px;background:#fff;border-top:1px solid #9a9a9a;border-left:1px solid #b0b0b0"></div>
<div class="t" style="left:148.6px;top:492px;width:80px;text-align:center;font-size:6.2px;color:#2e2e2e;">Время</div>
<div class="t" style="left:150.0px;top:499px;width:80px;text-align:center;font-size:6.2px;color:#2e2e2e;">581.094 ms</div>
<div class="t" style="left:194.5px;top:492px;width:80px;text-align:center;font-size:6.2px;color:#2e2e2e;">Канал_A</div>
<div class="t" style="left:194.6px;top:499px;width:80px;text-align:center;font-size:6.2px;color:#2e2e2e;">-47.065 V</div>
<div class="t" style="left:239.60000000000002px;top:492px;width:80px;text-align:center;font-size:6.2px;color:#2e2e2e;">Канал_B</div>
<div class="t" style="left:244.0px;top:499px;width:80px;text-align:center;font-size:6.2px;color:#2e2e2e;">28.887 V</div>
<div class="a" style="left:381.6px;top:495.6px;width:34.89999999999998px;height:11.899999999999977px;background:#e1e1e1;border:1px solid #adadad;font-size:6.5px;color:#222;text-align:center;line-height:9.899999999999977px;white-space:nowrap;overflow:hidden">Экран</div>
<div class="a" style="left:381.6px;top:511.7px;width:34.89999999999998px;height:11.900000000000034px;background:#e1e1e1;border:1px solid #adadad;font-size:6.5px;color:#222;text-align:center;line-height:9.900000000000034px;white-space:nowrap;overflow:hidden">Сохранить</div>
<div class="t" style="left:421.6px;top:519px;font-size:6.2px;color:#2e2e2e;">Внешняя</div>
<div class="a" style="left:448px;top:519px;width:9px;height:9px;border-radius:50%;border:1px solid #ccc;background:#fff"></div>
<div class="a" style="left:136px;top:527px;width:77px;height:48px;border:1px solid #dcdcdc"></div>
<div class="a" style="left:213px;top:527px;width:152px;height:48px;border-right:1px solid #dcdcdc"></div>
<div class="t" style="left:141px;top:528.5px;font-size:6.3px;color:#2e2e2e;">Развертка</div>
<div class="t" style="left:141px;top:538.2px;font-size:6.3px;color:#2e2e2e;">Шкала</div>
<div class="a" style="left:162px;top:537px;width:48px;height:11px;background:#fff;border:1px solid #a8a8a8;font-size:6.3px;color:#222;text-align:left;padding-left:3px;line-height:9px;white-space:nowrap;overflow:hidden">500 us/Div</div>
<div class="t" style="left:141px;top:550px;font-size:6.3px;color:#2e2e2e;">задержка X</div>
<div class="a" style="left:176px;top:549px;width:34px;height:11px;background:#fff;border:1px solid #a8a8a8;font-size:6.3px;color:#222;text-align:left;padding-left:3px;line-height:9px;white-space:nowrap;overflow:hidden">0</div>
<div class="a" style="left:140px;top:562px;width:14.599999999999994px;height:10px;background:#cce4f7;border:1px solid #3c7fb1;font-size:6.3px;color:#222;text-align:center;line-height:8px;white-space:nowrap;overflow:hidden">Y/T</div>
<div class="a" style="left:155.5px;top:562px;width:15.5px;height:10px;background:#e1e1e1;border:1px solid #adadad;font-size:6.3px;color:#222;text-align:center;line-height:8px;white-space:nowrap;overflow:hidden">Add</div>
<div class="a" style="left:174px;top:562px;width:16px;height:10px;background:#e1e1e1;border:1px solid #adadad;font-size:6.3px;color:#222;text-align:center;line-height:8px;white-space:nowrap;overflow:hidden">B/A</div>
<div class="a" style="left:191px;top:562px;width:16px;height:10px;background:#e1e1e1;border:1px solid #adadad;font-size:6.3px;color:#222;text-align:center;line-height:8px;white-space:nowrap;overflow:hidden">A/B</div>
<div class="t" style="left:218px;top:528.5px;font-size:6.3px;color:#2e2e2e;">Канал A</div>
<div class="t" style="left:215px;top:538.2px;font-size:6.3px;color:#2e2e2e;">Шкала</div>
<div class="a" style="left:238px;top:537px;width:48px;height:11px;background:#fff;border:1px solid #a8a8a8;font-size:6.3px;color:#222;text-align:left;padding-left:3px;line-height:9px;white-space:nowrap;overflow:hidden">50&nbsp; V/Div</div>
<div class="t" style="left:215px;top:550px;font-size:6.3px;color:#2e2e2e;">смещение Y</div>
<div class="a" style="left:252px;top:549px;width:34px;height:11px;background:#fff;border:1px solid #a8a8a8;font-size:6.3px;color:#222;text-align:left;padding-left:3px;line-height:9px;white-space:nowrap;overflow:hidden">0</div>
<div class="a" style="left:215.8px;top:562px;width:14.199999999999989px;height:10px;background:#cce4f7;border:1px solid #3c7fb1;font-size:6.3px;color:#222;text-align:center;line-height:8px;white-space:nowrap;overflow:hidden">AC</div>
<div class="a" style="left:231px;top:562px;width:14px;height:10px;background:#e1e1e1;border:1px solid #adadad;font-size:6.3px;color:#222;text-align:center;line-height:8px;white-space:nowrap;overflow:hidden">0</div>
<div class="a" style="left:248px;top:562px;width:14px;height:10px;background:#e1e1e1;border:1px solid #adadad;font-size:6.3px;color:#222;text-align:center;line-height:8px;white-space:nowrap;overflow:hidden">DC</div>
<div class="a" style="left:276px;top:563px;width:8px;height:8px;border-radius:50%;border:1px solid #ccc"></div>
<div class="t" style="left:293px;top:528.5px;font-size:6.3px;color:#2e2e2e;">Канал B</div>
<div class="t" style="left:290px;top:538.2px;font-size:6.3px;color:#2e2e2e;">Шкала</div>
<div class="a" style="left:313.6px;top:537px;width:48.39999999999998px;height:11px;background:#fff;border:1px solid #a8a8a8;font-size:6.3px;color:#222;text-align:left;padding-left:3px;line-height:9px;white-space:nowrap;overflow:hidden">50&nbsp; V/Div</div>
<div class="t" style="left:290px;top:550px;font-size:6.3px;color:#2e2e2e;">смещение Y</div>
<div class="a" style="left:328px;top:549px;width:34px;height:11px;background:#fff;border:1px solid #a8a8a8;font-size:6.3px;color:#222;text-align:left;padding-left:3px;line-height:9px;white-space:nowrap;overflow:hidden">0</div>
<div class="a" style="left:290px;top:562px;width:15px;height:10px;background:#cce4f7;border:1px solid #3c7fb1;font-size:6.3px;color:#222;text-align:center;line-height:8px;white-space:nowrap;overflow:hidden">AC</div>
<div class="a" style="left:306px;top:562px;width:14px;height:10px;background:#e1e1e1;border:1px solid #adadad;font-size:6.3px;color:#222;text-align:center;line-height:8px;white-space:nowrap;overflow:hidden">0</div>
<div class="a" style="left:323px;top:562px;width:14px;height:10px;background:#e1e1e1;border:1px solid #adadad;font-size:6.3px;color:#222;text-align:center;line-height:8px;white-space:nowrap;overflow:hidden">DC</div>
<div class="a" style="left:340px;top:562px;width:10px;height:10px;background:#e1e1e1;border:1px solid #adadad;font-size:6.3px;color:#222;text-align:center;line-height:8px;white-space:nowrap;overflow:hidden">-</div>
<div class="t" style="left:369px;top:528.5px;font-size:6.3px;color:#2e2e2e;">Синхронизация</div>
<div class="t" style="left:369px;top:538.5px;font-size:6.3px;color:#2e2e2e;">Запуск</div>
<div class="a" style="left:399.5px;top:540px;width:9.300000000000011px;height:9px;background:#cce4f7;border:1px solid #3c7fb1;font-size:6px;color:#222;text-align:center;line-height:7px;white-space:nowrap;overflow:hidden"></div>
<div class="a" style="left:409.5px;top:540px;width:9.0px;height:9px;background:#e1e1e1;border:1px solid #adadad;font-size:6px;color:#222;text-align:center;line-height:7px;white-space:nowrap;overflow:hidden"></div>
<svg class="a" style="left:399.5px;top:540px" width="20" height="9"><path d="M2.5,7 H4.5 V2 H7" fill="none" stroke="#222" stroke-width="0.9"/><path d="M5,3.5 L4.5,5" stroke="#222" stroke-width="0.7"/><path d="M12,2 H14 V7 H16.5" fill="none" stroke="#222" stroke-width="0.9"/></svg>
<div class="a" style="left:421.6px;top:540px;width:10.199999999999989px;height:9px;background:#cce4f7;border:1px solid #3c7fb1;font-size:6.3px;color:#222;text-align:center;line-height:7px;white-space:nowrap;overflow:hidden">A</div>
<div class="a" style="left:433px;top:540px;width:9px;height:9px;background:#e1e1e1;border:1px solid #adadad;font-size:6.3px;color:#222;text-align:center;line-height:7px;white-space:nowrap;overflow:hidden">B</div>
<div class="a" style="left:444.6px;top:540px;width:17.799999999999955px;height:9px;background:#e1e1e1;border:1px solid #adadad;font-size:6px;color:#222;text-align:center;line-height:7px;white-space:nowrap;overflow:hidden">Внеш</div>
<div class="t" style="left:369px;top:550px;font-size:6.3px;color:#2e2e2e;">Уровень</div>
<div class="a" style="left:398.6px;top:551.7px;width:45.099999999999966px;height:9.799999999999955px;background:#fff;border:1px solid #a8a8a8;font-size:6.3px;color:#222;text-align:left;padding-left:3px;line-height:7.7999999999999545px;white-space:nowrap;overflow:hidden">0</div>
<div class="a" style="left:443.7px;top:551.7px;width:18.900000000000034px;height:9.799999999999955px;background:#fff;border:1px solid #a8a8a8;font-size:6.3px;color:#222;text-align:left;padding-left:3px;line-height:7.7999999999999545px;white-space:nowrap;overflow:hidden">V</div>
<div class="t" style="left:369px;top:562px;font-size:6.3px;color:#2e2e2e;">Тип</div>
<div class="a" style="left:385px;top:563.5px;width:17px;height:11.5px;background:#e1e1e1;border:1px solid #adadad;font-size:6px;color:#222;text-align:center;line-height:9.5px;white-space:nowrap;overflow:hidden">Одн.</div>
<div class="a" style="left:405px;top:563.5px;width:16px;height:11.5px;background:#e1e1e1;border:1px solid #adadad;font-size:6px;color:#222;text-align:center;line-height:9.5px;white-space:nowrap;overflow:hidden">Норм</div>
<div class="a" style="left:425px;top:563.5px;width:18px;height:11.5px;background:#cce4f7;border:1px solid #3c7fb1;font-size:6px;color:#222;text-align:center;line-height:9.5px;white-space:nowrap;overflow:hidden">Авто</div>
<div class="a" style="left:445px;top:563.5px;width:17px;height:11.5px;background:#e1e1e1;border:1px solid #adadad;font-size:6px;color:#222;text-align:center;line-height:9.5px;white-space:nowrap;overflow:hidden">Нет</div>
<div class="a" style="left:468.5px;top:320px;width:332.0px;height:255px;background:#f0f0f0;border:1px solid #b8b8b8"></div>
<div class="a" style="left:469.5px;top:321px;width:330.0px;height:17.5px;background:#fff"></div>
<svg class="a" style="left:473.5px;top:325px" width="11" height="8"><polygon points="0,4 5,0 11,1 6,7" fill="#4b4b7d"/><polygon points="5,0 11,1 8,3" fill="#7a7ab0"/></svg>
<div class="t" style="left:485.5px;top:324px;font-size:6.7px;color:#9a9a9a;">Осциллограф-XSC2</div>
<svg class="a" style="left:787.0px;top:324.5px" width="10" height="10"><path d="M1.5,1.5 L8.5,8.5 M8.5,1.5 L1.5,8.5" stroke="#b4b4b4" stroke-width="1"/></svg>
<div class="a" style="left:469.5px;top:338.5px;width:330.0px;height:142.0px;background:#000"></div>
<svg class="a" style="left:468.5px;top:338px" width="332" height="143"><line x1="39.4" y1="7" x2="39.4" y2="137.60000000000002" stroke="#b4b4b4" stroke-width="1" stroke-dasharray="1.6,2.2"/><line x1="71.2" y1="7" x2="71.2" y2="137.60000000000002" stroke="#b4b4b4" stroke-width="1" stroke-dasharray="1.6,2.2"/><line x1="103.0" y1="7" x2="103.0" y2="137.60000000000002" stroke="#b4b4b4" stroke-width="1" stroke-dasharray="1.6,2.2"/><line x1="134.8" y1="7" x2="134.8" y2="137.60000000000002" stroke="#b4b4b4" stroke-width="1" stroke-dasharray="1.6,2.2"/><line x1="166.5" y1="7" x2="166.5" y2="137.60000000000002" stroke="#b4b4b4" stroke-width="1" stroke-dasharray="1.6,2.2"/><line x1="198.3" y1="7" x2="198.3" y2="137.60000000000002" stroke="#b4b4b4" stroke-width="1" stroke-dasharray="1.6,2.2"/><line x1="230.1" y1="7" x2="230.1" y2="137.60000000000002" stroke="#b4b4b4" stroke-width="1" stroke-dasharray="1.6,2.2"/><line x1="261.9" y1="7" x2="261.9" y2="137.60000000000002" stroke="#b4b4b4" stroke-width="1" stroke-dasharray="1.6,2.2"/><line x1="293.7" y1="7" x2="293.7" y2="137.60000000000002" stroke="#b4b4b4" stroke-width="1" stroke-dasharray="1.6,2.2"/><line x1="7.600000000000023" y1="28.8" x2="325.5" y2="28.8" stroke="#b4b4b4" stroke-width="1" stroke-dasharray="1.6,2.2"/><line x1="7.600000000000023" y1="50.5" x2="325.5" y2="50.5" stroke="#b4b4b4" stroke-width="1" stroke-dasharray="1.6,2.2"/><line x1="7.600000000000023" y1="72.3" x2="325.5" y2="72.3" stroke="#e4e4e4" stroke-width="1.3" stroke-dasharray="3.2,1"/><line x1="7.600000000000023" y1="94.1" x2="325.5" y2="94.1" stroke="#b4b4b4" stroke-width="1" stroke-dasharray="1.6,2.2"/><line x1="7.600000000000023" y1="115.8" x2="325.5" y2="115.8" stroke="#b4b4b4" stroke-width="1" stroke-dasharray="1.6,2.2"/><line x1="7.600000000000023" y1="7" x2="325.5" y2="7" stroke="#8a8a8a" stroke-width="1.5"/><line x1="7.600000000000023" y1="137.60000000000002" x2="325.5" y2="137.60000000000002" stroke="#8a8a8a" stroke-width="1.5"/><polyline points="7.6,56.4 8.6,53.6 9.6,51.0 10.6,48.6 11.6,46.5 12.6,44.6 13.6,42.9 14.6,41.6 15.6,40.6 16.6,39.8 17.6,39.4 18.6,39.3 19.6,39.5 20.6,40.1 21.6,40.9 22.6,42.1 23.6,43.6 24.6,45.3 25.6,47.3 26.6,49.6 27.6,52.0 28.6,54.7 29.6,57.5 30.6,60.5 31.6,63.6 32.6,66.8 33.6,70.0 34.6,73.3 35.6,76.5 36.6,79.8 37.6,82.9 38.6,85.9 39.6,88.8 40.6,91.6 41.6,94.1 42.6,96.4 43.6,98.5 44.6,100.4 45.6,102.0 46.6,103.2 47.6,104.2 48.6,104.9 49.6,105.2 50.6,105.3 51.6,105.0 52.6,104.4 53.6,103.4 54.6,102.2 55.6,100.7 56.6,98.9 57.6,96.8 58.6,94.5 59.6,92.0 60.6,89.3 61.6,86.5 62.6,83.4 63.6,80.3 64.6,77.1 65.6,73.9 66.6,70.6 67.6,67.4 68.6,64.2 69.6,61.1 70.6,58.1 71.6,55.2 72.6,52.5 73.6,50.0 74.6,47.7 75.6,45.6 76.6,43.9 77.6,42.3 78.6,41.1 79.6,40.2 80.6,39.6 81.6,39.3 82.6,39.4 83.6,39.7 84.6,40.4 85.6,41.4 86.6,42.7 87.6,44.3 88.6,46.1 89.6,48.2 90.6,50.6 91.6,53.1 92.6,55.9 93.6,58.8 94.6,61.8 95.6,64.9 96.6,68.2 97.6,71.4 98.6,74.7 99.6,77.9 100.6,81.1 101.6,84.2 102.6,87.2 103.6,90.0 104.6,92.7 105.6,95.1 106.6,97.4 107.6,99.4 108.6,101.1 109.6,102.5 110.6,103.7 111.6,104.5 112.6,105.1 113.6,105.3 114.6,105.2 115.6,104.8 116.6,104.0 117.6,103.0 118.6,101.6 119.6,100.0 120.6,98.1 121.6,95.9 122.6,93.5 123.6,90.9 124.6,88.1 125.6,85.2 126.6,82.1 127.6,79.0 128.6,75.8 129.6,72.5 130.6,69.3 131.6,66.0 132.6,62.9 133.6,59.8 134.6,56.8 135.6,54.0 136.6,51.4 137.6,49.0 138.6,46.8 139.6,44.9 140.6,43.2 141.6,41.8 142.6,40.7 143.6,39.9 144.6,39.4 145.6,39.3 146.6,39.5 147.6,40.0 148.6,40.8 149.6,41.9 150.6,43.3 151.6,45.0 152.6,47.0 153.6,49.2 154.6,51.6 155.6,54.3 156.6,57.1 157.6,60.0 158.6,63.1 159.6,66.3 160.6,69.5 161.6,72.8 162.6,76.0 163.6,79.2 164.6,82.4 165.6,85.4 166.6,88.4 167.6,91.1 168.6,93.7 169.6,96.1 170.6,98.2 171.6,100.1 172.6,101.7 173.6,103.1" fill="none" stroke="#86a886" stroke-width="1"/><polyline points="7.6,88.2 8.6,91.0 9.6,93.6 10.6,96.0 11.6,98.1 12.6,100.0 13.6,101.7 14.6,103.0 15.6,104.0 16.6,104.8 17.6,105.2 18.6,105.3 19.6,105.1 20.6,104.5 21.6,103.7 22.6,102.5 23.6,101.0 24.6,99.3 25.6,97.3 26.6,95.0 27.6,92.6 28.6,89.9 29.6,87.1 30.6,84.1 31.6,81.0 32.6,77.8 33.6,74.6 34.6,71.3 35.6,68.1 36.6,64.8 37.6,61.7 38.6,58.7 39.6,55.8 40.6,53.0 41.6,50.5 42.6,48.2 43.6,46.1 44.6,44.2 45.6,42.6 46.6,41.4 47.6,40.4 48.6,39.7 49.6,39.4 50.6,39.3 51.6,39.6 52.6,40.2 53.6,41.2 54.6,42.4 55.6,43.9 56.6,45.7 57.6,47.8 58.6,50.1 59.6,52.6 60.6,55.3 61.6,58.1 62.6,61.2 63.6,64.3 64.6,67.5 65.6,70.7 66.6,74.0 67.6,77.2 68.6,80.4 69.6,83.5 70.6,86.5 71.6,89.4 72.6,92.1 73.6,94.6 74.6,96.9 75.6,99.0 76.6,100.7 77.6,102.3 78.6,103.5 79.6,104.4 80.6,105.0 81.6,105.3 82.6,105.2 83.6,104.9 84.6,104.2 85.6,103.2 86.6,101.9 87.6,100.3 88.6,98.5 89.6,96.4 90.6,94.0 91.6,91.5 92.6,88.7 93.6,85.8 94.6,82.8 95.6,79.7 96.6,76.4 97.6,73.2 98.6,69.9 99.6,66.7 100.6,63.5 101.6,60.4 102.6,57.4 103.6,54.6 104.6,51.9 105.6,49.5 106.6,47.2 107.6,45.2 108.6,43.5 109.6,42.1 110.6,40.9 111.6,40.1 112.6,39.5 113.6,39.3 114.6,39.4 115.6,39.8 116.6,40.6 117.6,41.6 118.6,43.0 119.6,44.6 120.6,46.5 121.6,48.7 122.6,51.1 123.6,53.7 124.6,56.5 125.6,59.4 126.6,62.5 127.6,65.6 128.6,68.8 129.6,72.1 130.6,75.3 131.6,78.6 132.6,81.7 133.6,84.8 134.6,87.8 135.6,90.6 136.6,93.2 137.6,95.6 138.6,97.8 139.6,99.7 140.6,101.4 141.6,102.8 142.6,103.9 143.6,104.7 144.6,105.2 145.6,105.3 146.6,105.1 147.6,104.6 148.6,103.8 149.6,102.7 150.6,101.3 151.6,99.6 152.6,97.6 153.6,95.4 154.6,93.0 155.6,90.3 156.6,87.5 157.6,84.6 158.6,81.5 159.6,78.3 160.6,75.1 161.6,71.8 162.6,68.6 163.6,65.4 164.6,62.2 165.6,59.2 166.6,56.2 167.6,53.5 168.6,50.9 169.6,48.5 170.6,46.4 171.6,44.5 172.6,42.9 173.6,41.5" fill="none" stroke="#a05a9c" stroke-width="1"/><line x1="7.600000000000023" y1="7" x2="7.600000000000023" y2="137.60000000000002" stroke="#742a2a" stroke-width="1"/><line x1="325.5" y1="7" x2="325.5" y2="137.60000000000002" stroke="#1c1c64" stroke-width="1.6"/><polygon points="3.6000000000000227,2 11.600000000000023,2 7.600000000000023,7" fill="#5fc8c8"/><polygon points="321.5,2 329.5,2 325.5,7" fill="#d8d890"/></svg>
<div class="t" style="left:472.5px;top:480.5px;font-size:6.3px;color:#555;">&lt;</div>
<div class="a" style="left:780.5px;top:482px;width:9.0px;height:8px;background:#d0d0d0"></div>
<div class="t" style="left:794.5px;top:480px;font-size:11px;color:#555;">&#x203A;</div>
<div class="t" style="left:472.5px;top:496px;font-size:6.3px;color:#2e2e2e;">T1</div>
<div class="t" style="left:472.5px;top:503.5px;font-size:6.3px;color:#2e2e2e;">T2</div>
<div class="t" style="left:472.5px;top:514.5px;font-size:6.3px;color:#2e2e2e;">T2-T1</div>
<div class="a" style="left:484.5px;top:496px;width:8.5px;height:8px;background:#e4e4e4;border:1px solid #d4d4d4"></div>
<div class="a" style="left:494.0px;top:496px;width:7.5px;height:8px;background:#e4e4e4;border:1px solid #d4d4d4"></div>
<svg class="a" style="left:484.5px;top:496px" width="18" height="8"><path d="M2,4 L5,1.2 V3 H7 V5 H5 V6.8 Z" fill="#111"/><path d="M15.5,4 L12.5,1.2 V3 H10.5 V5 H12.5 V6.8 Z" fill="#111"/></svg>
<div class="a" style="left:484.5px;top:504px;width:8.5px;height:8px;background:#e4e4e4;border:1px solid #d4d4d4"></div>
<div class="a" style="left:494.0px;top:504px;width:7.5px;height:8px;background:#e4e4e4;border:1px solid #d4d4d4"></div>
<svg class="a" style="left:484.5px;top:504px" width="18" height="8"><path d="M2,4 L5,1.2 V3 H7 V5 H5 V6.8 Z" fill="#111"/><path d="M15.5,4 L12.5,1.2 V3 H10.5 V5 H12.5 V6.8 Z" fill="#111"/></svg>
<div class="a" style="left:469.5px;top:492px;width:34.0px;height:31px;border-right:1px solid #d8d8d8;border-bottom:1px solid #d8d8d8"></div>
<div class="a" style="left:504.0px;top:492px;width:206.0px;height:31px;background:#fff;border-top:1px solid #9a9a9a;border-left:1px solid #b0b0b0"></div>
<div class="t" style="left:482.1px;top:492px;width:80px;text-align:center;font-size:6.2px;color:#2e2e2e;">Время</div>
<div class="t" style="left:483.5px;top:499px;width:80px;text-align:center;font-size:6.2px;color:#2e2e2e;">572.073 ms</div>
<div class="t" style="left:528.0px;top:492px;width:80px;text-align:center;font-size:6.2px;color:#2e2e2e;">Канал_A</div>
<div class="t" style="left:528.1px;top:499px;width:80px;text-align:center;font-size:6.2px;color:#2e2e2e;">6.686 V</div>
<div class="t" style="left:573.1px;top:492px;width:80px;text-align:center;font-size:6.2px;color:#2e2e2e;">Канал_B</div>
<div class="t" style="left:577.5px;top:499px;width:80px;text-align:center;font-size:6.2px;color:#2e2e2e;">-6.683 V</div>
<div class="a" style="left:715.1px;top:495.6px;width:34.89999999999998px;height:11.899999999999977px;background:#e1e1e1;border:1px solid #adadad;font-size:6.5px;color:#222;text-align:center;line-height:9.899999999999977px;white-space:nowrap;overflow:hidden">Экран</div>
<div class="a" style="left:715.1px;top:511.7px;width:34.89999999999998px;height:11.900000000000034px;background:#e1e1e1;border:1px solid #adadad;font-size:6.5px;color:#222;text-align:center;line-height:9.900000000000034px;white-space:nowrap;overflow:hidden">Сохранить</div>
<div class="t" style="left:755.1px;top:519px;font-size:6.2px;color:#2e2e2e;">Внешняя</div>
<div class="a" style="left:781.5px;top:519px;width:9px;height:9px;border-radius:50%;border:1px solid #ccc;background:#fff"></div>
<div class="a" style="left:469.5px;top:527px;width:77.0px;height:48px;border:1px solid #dcdcdc"></div>
<div class="a" style="left:546.5px;top:527px;width:152.0px;height:48px;border-right:1px solid #dcdcdc"></div>
<div class="t" style="left:474.5px;top:528.5px;font-size:6.3px;color:#2e2e2e;">Развертка</div>
<div class="t" style="left:474.5px;top:538.2px;font-size:6.3px;color:#2e2e2e;">Шкала</div>
<div class="a" style="left:495.5px;top:537px;width:48.0px;height:11px;background:#fff;border:1px solid #a8a8a8;font-size:6.3px;color:#222;text-align:left;padding-left:3px;line-height:9px;white-space:nowrap;overflow:hidden">500 us/Div</div>
<div class="t" style="left:474.5px;top:550px;font-size:6.3px;color:#2e2e2e;">задержка X</div>
<div class="a" style="left:509.5px;top:549px;width:34.0px;height:11px;background:#fff;border:1px solid #a8a8a8;font-size:6.3px;color:#222;text-align:left;padding-left:3px;line-height:9px;white-space:nowrap;overflow:hidden">0</div>
<div class="a" style="left:473.5px;top:562px;width:14.600000000000023px;height:10px;background:#cce4f7;border:1px solid #3c7fb1;font-size:6.3px;color:#222;text-align:center;line-height:8px;white-space:nowrap;overflow:hidden">Y/T</div>
<div class="a" style="left:489.0px;top:562px;width:15.5px;height:10px;background:#e1e1e1;border:1px solid #adadad;font-size:6.3px;color:#222;text-align:center;line-height:8px;white-space:nowrap;overflow:hidden">Add</div>
<div class="a" style="left:507.5px;top:562px;width:16.0px;height:10px;background:#e1e1e1;border:1px solid #adadad;font-size:6.3px;color:#222;text-align:center;line-height:8px;white-space:nowrap;overflow:hidden">B/A</div>
<div class="a" style="left:524.5px;top:562px;width:16.0px;height:10px;background:#e1e1e1;border:1px solid #adadad;font-size:6.3px;color:#222;text-align:center;line-height:8px;white-space:nowrap;overflow:hidden">A/B</div>
<div class="t" style="left:551.5px;top:528.5px;font-size:6.3px;color:#2e2e2e;">Канал A</div>
<div class="t" style="left:548.5px;top:538.2px;font-size:6.3px;color:#2e2e2e;">Шкала</div>
<div class="a" style="left:571.5px;top:537px;width:48.0px;height:11px;background:#fff;border:1px solid #a8a8a8;font-size:6.3px;color:#222;text-align:left;padding-left:3px;line-height:9px;white-space:nowrap;overflow:hidden">10&nbsp; V/Div</div>
<div class="t" style="left:548.5px;top:550px;font-size:6.3px;color:#2e2e2e;">смещение Y</div>
<div class="a" style="left:585.5px;top:549px;width:34.0px;height:11px;background:#fff;border:1px solid #a8a8a8;font-size:6.3px;color:#222;text-align:left;padding-left:3px;line-height:9px;white-space:nowrap;overflow:hidden">0</div>
<div class="a" style="left:549.3px;top:562px;width:14.200000000000045px;height:10px;background:#cce4f7;border:1px solid #3c7fb1;font-size:6.3px;color:#222;text-align:center;line-height:8px;white-space:nowrap;overflow:hidden">AC</div>
<div class="a" style="left:564.5px;top:562px;width:14.0px;height:10px;background:#e1e1e1;border:1px solid #adadad;font-size:6.3px;color:#222;text-align:center;line-height:8px;white-space:nowrap;overflow:hidden">0</div>
<div class="a" style="left:581.5px;top:562px;width:14.0px;height:10px;background:#e1e1e1;border:1px solid #adadad;font-size:6.3px;color:#222;text-align:center;line-height:8px;white-space:nowrap;overflow:hidden">DC</div>
<div class="a" style="left:609.5px;top:563px;width:8px;height:8px;border-radius:50%;border:1px solid #ccc"></div>
<div class="t" style="left:626.5px;top:528.5px;font-size:6.3px;color:#2e2e2e;">Канал B</div>
<div class="t" style="left:623.5px;top:538.2px;font-size:6.3px;color:#2e2e2e;">Шкала</div>
<div class="a" style="left:647.1px;top:537px;width:48.39999999999998px;height:11px;background:#fff;border:1px solid #a8a8a8;font-size:6.3px;color:#222;text-align:left;padding-left:3px;line-height:9px;white-space:nowrap;overflow:hidden">10&nbsp; V/Div</div>
<div class="t" style="left:623.5px;top:550px;font-size:6.3px;color:#2e2e2e;">смещение Y</div>
<div class="a" style="left:661.5px;top:549px;width:34.0px;height:11px;background:#fff;border:1px solid #a8a8a8;font-size:6.3px;color:#222;text-align:left;padding-left:3px;line-height:9px;white-space:nowrap;overflow:hidden">0</div>
<div class="a" style="left:623.5px;top:562px;width:15.0px;height:10px;background:#cce4f7;border:1px solid #3c7fb1;font-size:6.3px;color:#222;text-align:center;line-height:8px;white-space:nowrap;overflow:hidden">AC</div>
<div class="a" style="left:639.5px;top:562px;width:14.0px;height:10px;background:#e1e1e1;border:1px solid #adadad;font-size:6.3px;color:#222;text-align:center;line-height:8px;white-space:nowrap;overflow:hidden">0</div>
<div class="a" style="left:656.5px;top:562px;width:14.0px;height:10px;background:#e1e1e1;border:1px solid #adadad;font-size:6.3px;color:#222;text-align:center;line-height:8px;white-space:nowrap;overflow:hidden">DC</div>
<div class="a" style="left:673.5px;top:562px;width:10.0px;height:10px;background:#e1e1e1;border:1px solid #adadad;font-size:6.3px;color:#222;text-align:center;line-height:8px;white-space:nowrap;overflow:hidden">-</div>
<div class="t" style="left:702.5px;top:528.5px;font-size:6.3px;color:#2e2e2e;">Синхронизация</div>
<div class="t" style="left:702.5px;top:538.5px;font-size:6.3px;color:#2e2e2e;">Запуск</div>
<div class="a" style="left:733.0px;top:540px;width:9.299999999999955px;height:9px;background:#cce4f7;border:1px solid #3c7fb1;font-size:6px;color:#222;text-align:center;line-height:7px;white-space:nowrap;overflow:hidden"></div>
<div class="a" style="left:743.0px;top:540px;width:9.0px;height:9px;background:#e1e1e1;border:1px solid #adadad;font-size:6px;color:#222;text-align:center;line-height:7px;white-space:nowrap;overflow:hidden"></div>
<svg class="a" style="left:733.0px;top:540px" width="20" height="9"><path d="M2.5,7 H4.5 V2 H7" fill="none" stroke="#222" stroke-width="0.9"/><path d="M5,3.5 L4.5,5" stroke="#222" stroke-width="0.7"/><path d="M12,2 H14 V7 H16.5" fill="none" stroke="#222" stroke-width="0.9"/></svg>
<div class="a" style="left:755.1px;top:540px;width:10.199999999999932px;height:9px;background:#cce4f7;border:1px solid #3c7fb1;font-size:6.3px;color:#222;text-align:center;line-height:7px;white-space:nowrap;overflow:hidden">A</div>
<div class="a" style="left:766.5px;top:540px;width:9.0px;height:9px;background:#e1e1e1;border:1px solid #adadad;font-size:6.3px;color:#222;text-align:center;line-height:7px;white-space:nowrap;overflow:hidden">B</div>
<div class="a" style="left:778.1px;top:540px;width:17.799999999999955px;height:9px;background:#e1e1e1;border:1px solid #adadad;font-size:6px;color:#222;text-align:center;line-height:7px;white-space:nowrap;overflow:hidden">Внеш</div>
<div class="t" style="left:702.5px;top:550px;font-size:6.3px;color:#2e2e2e;">Уровень</div>
<div class="a" style="left:732.1px;top:551.7px;width:45.10000000000002px;height:9.799999999999955px;background:#fff;border:1px solid #a8a8a8;font-size:6.3px;color:#222;text-align:left;padding-left:3px;line-height:7.7999999999999545px;white-space:nowrap;overflow:hidden">0</div>
<div class="a" style="left:777.2px;top:551.7px;width:18.899999999999977px;height:9.799999999999955px;background:#fff;border:1px solid #a8a8a8;font-size:6.3px;color:#222;text-align:left;padding-left:3px;line-height:7.7999999999999545px;white-space:nowrap;overflow:hidden">V</div>
<div class="t" style="left:702.5px;top:562px;font-size:6.3px;color:#2e2e2e;">Тип</div>
<div class="a" style="left:718.5px;top:563.5px;width:17.0px;height:11.5px;background:#e1e1e1;border:1px solid #adadad;font-size:6px;color:#222;text-align:center;line-height:9.5px;white-space:nowrap;overflow:hidden">Одн.</div>
<div class="a" style="left:738.5px;top:563.5px;width:16.0px;height:11.5px;background:#e1e1e1;border:1px solid #adadad;font-size:6px;color:#222;text-align:center;line-height:9.5px;white-space:nowrap;overflow:hidden">Норм</div>
<div class="a" style="left:758.5px;top:563.5px;width:18.0px;height:11.5px;background:#cce4f7;border:1px solid #3c7fb1;font-size:6px;color:#222;text-align:center;line-height:9.5px;white-space:nowrap;overflow:hidden">Авто</div>
<div class="a" style="left:778.5px;top:563.5px;width:17.0px;height:11.5px;background:#e1e1e1;border:1px solid #adadad;font-size:6px;color:#222;text-align:center;line-height:9.5px;white-space:nowrap;overflow:hidden">Нет</div>
<div class="a" style="left:466px;top:320.5px;width:3.5px;height:249.5px;background:#c4c4c4"></div>
<div class="a" style="left:800px;top:320.5px;width:4px;height:249.5px;background:#c8c8c8"></div>
<div class="a" style="left:804px;top:320.3px;width:180.5px;height:124.19999999999999px;background:#f0f0f0;border:1px solid #c4c4c4;box-shadow:1px 1px 3px rgba(0,0,0,.25)"></div>
<div class="a" style="left:805px;top:321.3px;width:178.5px;height:16.399999999999977px;background:#fff"></div>
<svg class="a" style="left:809px;top:325px" width="11" height="8"><polygon points="0,4 5,0 11,1 6,7" fill="#4b4b7d"/><polygon points="5,0 11,1 8,3" fill="#7a7ab0"/></svg>
<div class="t" style="left:821px;top:324px;font-size:6.7px;color:#a0a0a0;">Измеритель нелинейных искажений-XDA3</div>
<svg class="a" style="left:970.6px;top:324.5px" width="10" height="10"><path d="M1.5,1.5 L8.5,8.5 M8.5,1.5 L1.5,8.5" stroke="#b4b4b4" stroke-width="1"/></svg>
<div class="t" style="left:809.0px;top:337.3px;width:170px;text-align:center;font-size:6.3px;color:#222;">Общие нелинейные искажения(THD)</div>
<div class="a" style="left:806.5px;top:349.3px;width:173.79999999999995px;height:15.0px;background:#000;border:1px solid #888"></div>
<div class="t" style="left:843.8px;top:352px;width:100px;text-align:center;font-size:9.2px;color:#fff;line-height:10px">0.082 %</div>
<div class="a" style="left:806px;top:369px;width:176px;height:1px;background:#d4d4d4"></div>
<div class="a" style="left:808px;top:378.2px;width:23.299999999999955px;height:13.5px;background:#cce4f7;border:1px solid #3c7fb1;font-size:6.5px;color:#222;text-align:center;line-height:11.5px;white-space:nowrap;overflow:hidden">Старт</div>
<div class="a" style="left:808px;top:396.8px;width:23.299999999999955px;height:13.899999999999977px;background:#e1e1e1;border:1px solid #adadad;font-size:6.5px;color:#222;text-align:center;line-height:11.899999999999977px;white-space:nowrap;overflow:hidden">Стоп</div>
<div class="a" style="left:837px;top:371.3px;width:142.60000000000002px;height:46.30000000000001px;background:#ececec;border-left:1px solid #dadada"></div>
<div class="t" style="left:795px;top:376.7px;width:100px;text-align:right;font-size:6.3px;color:#333">Основная частота.</div>
<div class="a" style="left:902px;top:376.5px;width:48px;height:11.0px;background:#ececec;border:1px solid #d4d4d4;font-size:6.3px;color:#a0a0a0;text-align:center;padding-left:3px;line-height:9.0px;white-space:nowrap;overflow:hidden">1</div>
<div class="a" style="left:951px;top:376.5px;width:24px;height:11.0px;background:#ececec;border:1px solid #d4d4d4;font-size:6px;color:#a0a0a0;text-align:left;padding-left:3px;line-height:9.0px;white-space:nowrap;overflow:hidden">kHz</div>
<div class="t" style="left:795px;top:395.3px;width:100px;text-align:right;font-size:6.3px;color:#333">Разрешение.</div>
<div class="a" style="left:902px;top:394px;width:73px;height:11.600000000000023px;background:#d6d6d6;border:1px solid #d0d0d0;font-size:6px;color:#a8a8a8;text-align:left;padding-left:3px;line-height:9.600000000000023px;white-space:nowrap;overflow:hidden">100 Hz</div>
<div class="t" style="left:968px;top:394.5px;font-size:6px;color:#bbb;">&#8964;</div>
<div class="a" style="left:902px;top:405.6px;width:73px;height:12.399999999999977px;background:#fff;border:1px solid #e0e0e0;font-size:6.2px;color:#222;text-align:center;padding-left:3px;line-height:10.399999999999977px;white-space:nowrap;overflow:hidden">100 Hz</div>
<div class="t" style="left:811.6px;top:420.7px;font-size:6.3px;color:#2e2e2e;">Управление</div>
<div class="a" style="left:811px;top:430.4px;width:31.899999999999977px;height:9.200000000000045px;background:#cce4f7;border:1px solid #3c7fb1;font-size:6.2px;color:#222;text-align:center;line-height:7.2000000000000455px;white-space:nowrap;overflow:hidden">THD</div>
<div class="a" style="left:845.9px;top:430.4px;width:30.600000000000023px;height:9.200000000000045px;background:#e1e1e1;border:1px solid #adadad;font-size:6.2px;color:#222;text-align:center;line-height:7.2000000000000455px;white-space:nowrap;overflow:hidden">SINAD</div>
<div class="a" style="left:880px;top:430.4px;width:31px;height:9.200000000000045px;background:#cccccc;border:1px solid #bfbfbf;font-size:6.2px;color:#a0a0a0;text-align:center;line-height:7.2000000000000455px;white-space:nowrap;overflow:hidden">Уст...</div>
<div class="t" style="left:918.6px;top:420.7px;font-size:6.3px;color:#2e2e2e;">Экран</div>
<div class="a" style="left:915.8px;top:430.4px;width:14.200000000000045px;height:9.200000000000045px;background:#cce4f7;border:1px solid #3c7fb1;font-size:6.2px;color:#222;text-align:center;line-height:7.2000000000000455px;white-space:nowrap;overflow:hidden">%</div>
<div class="a" style="left:933px;top:430.4px;width:14px;height:9.200000000000045px;background:#e1e1e1;border:1px solid #adadad;font-size:6.2px;color:#222;text-align:center;line-height:7.2000000000000455px;white-space:nowrap;overflow:hidden">dB</div>
<div class="a" style="left:912px;top:422px;width:39px;height:20px;border:1px solid #dcdcdc;border-left:none"></div>
<div class="t" style="left:958px;top:432.3px;font-size:6.3px;color:#2e2e2e;">Вх</div>
<div class="a" style="left:968px;top:433px;width:8px;height:8px;border-radius:50%;border:1px solid #ccc;background:#fff"></div>
<svg class="a" style="left:976.5px;top:436.5px" width="7" height="7"><g fill="#b8b8b8"><rect x="5" y="1" width="1.2" height="1.2"/><rect x="3" y="3" width="1.2" height="1.2"/><rect x="5" y="3" width="1.2" height="1.2"/><rect x="1" y="5" width="1.2" height="1.2"/><rect x="3" y="5" width="1.2" height="1.2"/><rect x="5" y="5" width="1.2" height="1.2"/></g></svg>
<div class="a" style="left:804.6px;top:448.3px;width:130.79999999999995px;height:88.69999999999999px;background:#f0f0f0;border:1px solid #c4c4c4;box-shadow:1px 1px 3px rgba(0,0,0,.25)"></div>
<div class="a" style="left:805.6px;top:449.3px;width:128.79999999999995px;height:18.30000000000001px;background:#fff"></div>
<svg class="a" style="left:810px;top:453.5px" width="11" height="8"><polygon points="0,4 5,0 11,1 6,7" fill="#4b4b7d"/><polygon points="5,0 11,1 8,3" fill="#7a7ab0"/></svg>
<div class="t" style="left:821px;top:452.5px;font-size:6.7px;color:#a0a0a0;">Ваттметр-XWM1</div>
<svg class="a" style="left:921.7px;top:452.5px" width="10" height="10"><path d="M1.5,1.5 L8.5,8.5 M8.5,1.5 L1.5,8.5" stroke="#b4b4b4" stroke-width="1"/></svg>
<div class="a" style="left:807px;top:469.8px;width:125.20000000000005px;height:12.899999999999977px;background:#000;border:1px solid #888"></div>
<div class="t" style="left:824.6px;top:471.5px;width:100px;text-align:center;font-size:9.2px;color:#fff;">14.823 W</div>
<div class="a" style="left:806px;top:485.5px;width:128px;height:1.0px;background:#d0d0d0"></div>
<div class="t" style="left:808.3px;top:489.3px;font-size:6.2px;color:#222;">Коэффициент мощности:</div>
<div class="a" style="left:888px;top:490px;width:45px;height:8.600000000000023px;background:#000;border:1px solid #777"></div>
<div class="t" style="left:880px;top:489.3px;width:40px;text-align:right;font-size:6.5px;color:#fff">1.000</div>
<div class="t" style="left:812.5px;top:504px;font-size:6.3px;color:#2e2e2e;">Напряжение</div>
<div class="t" style="left:904.6px;top:504px;font-size:6.3px;color:#2e2e2e;">Ток</div>
<div class="t" style="left:808.8px;top:514.5px;width:10px;text-align:center;font-size:6.3px;color:#2e2e2e;">+</div>
<div class="a" style="left:809.8px;top:522.5px;width:8.5px;height:8.5px;border-radius:50%;border:1px solid #ccc;background:#eee"></div>
<div class="a" style="left:812.5999999999999px;top:525.3px;width:3px;height:3px;border-radius:50%;background:#c8c8c8"></div>
<div class="t" style="left:832.8px;top:514.5px;width:10px;text-align:center;font-size:6.3px;color:#2e2e2e;">&#8211;</div>
<div class="a" style="left:833.8px;top:522.5px;width:8.5px;height:8.5px;border-radius:50%;border:1px solid #ccc;background:#eee"></div>
<div class="a" style="left:836.5999999999999px;top:525.3px;width:3px;height:3px;border-radius:50%;background:#c8c8c8"></div>
<div class="t" style="left:899.6px;top:514.5px;width:10px;text-align:center;font-size:6.3px;color:#2e2e2e;">+</div>
<div class="a" style="left:900.6px;top:522.5px;width:8.5px;height:8.5px;border-radius:50%;border:1px solid #ccc;background:#eee"></div>
<div class="a" style="left:903.4px;top:525.3px;width:3px;height:3px;border-radius:50%;background:#c8c8c8"></div>
<div class="t" style="left:919.6px;top:514.5px;width:10px;text-align:center;font-size:6.3px;color:#2e2e2e;">&#8211;</div>
<div class="a" style="left:920.6px;top:522.5px;width:8.5px;height:8.5px;border-radius:50%;border:1px solid #ccc;background:#eee"></div>
<div class="a" style="left:923.4px;top:525.3px;width:3px;height:3px;border-radius:50%;background:#c8c8c8"></div>
<svg class="a" style="left:927.5px;top:529px" width="7" height="7"><g fill="#b8b8b8"><rect x="5" y="1" width="1.2" height="1.2"/><rect x="3" y="3" width="1.2" height="1.2"/><rect x="5" y="3" width="1.2" height="1.2"/><rect x="1" y="5" width="1.2" height="1.2"/><rect x="3" y="5" width="1.2" height="1.2"/><rect x="5" y="5" width="1.2" height="1.2"/></g></svg>
</div></body></html>
